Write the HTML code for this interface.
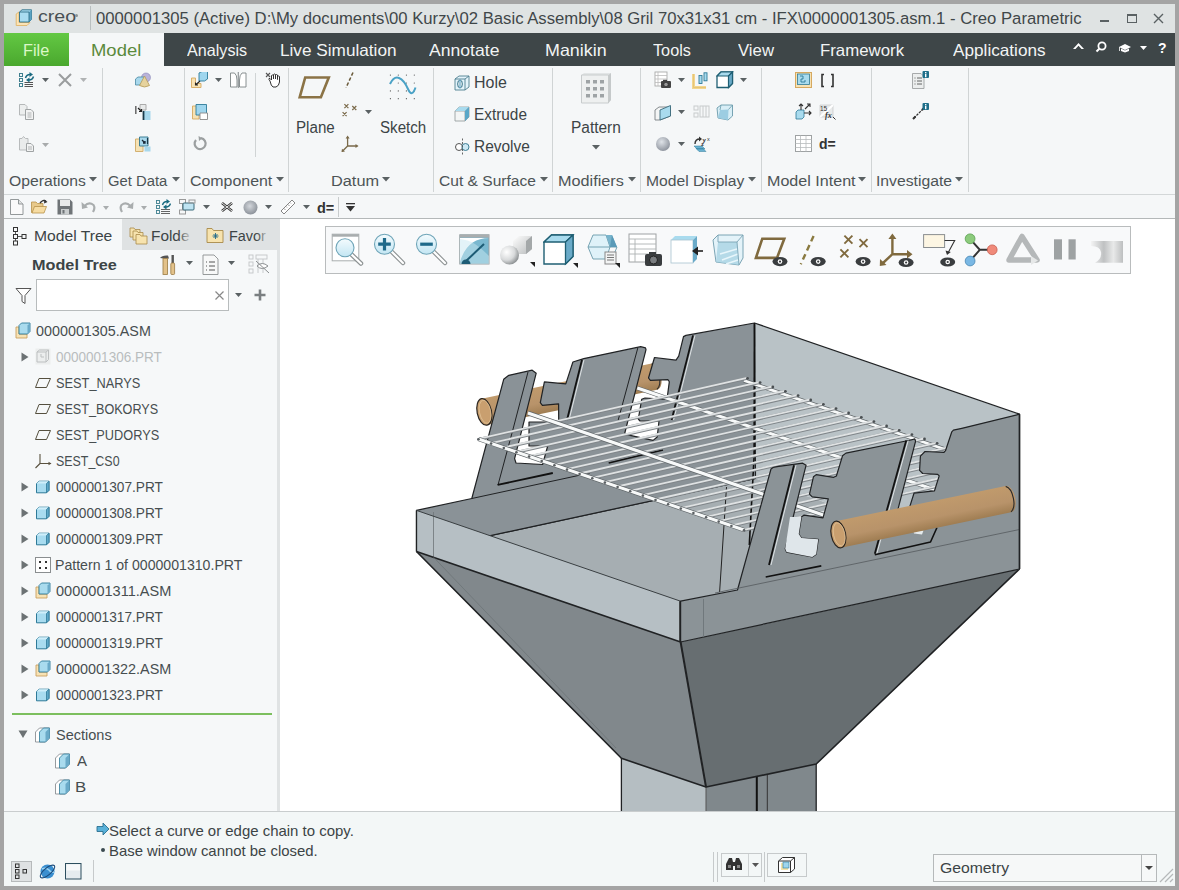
<!DOCTYPE html><html><head><meta charset="utf-8"><style>
html,body{margin:0;padding:0;width:1179px;height:890px;overflow:hidden;background:#a4a4a4;}
body{position:relative;font-family:"Liberation Sans",sans-serif;}
.t{position:absolute;white-space:pre;line-height:1;}
</style></head><body>
<div style="position:absolute;left:4px;top:4px;width:1171px;height:882px;background:#f5f7f8;"></div>
<div style="position:absolute;left:4px;top:4px;width:1171px;height:29px;background:#dfe3e3;"></div>
<svg style="position:absolute;left:15px;top:9px;" width="19" height="18" viewBox="0 0 19 18"><path d="M1.2 5 L4 3 V13.5 H15 L12 16.5 H1.2Z" fill="#fbe3b5" stroke="#e0b46a" stroke-width="0.9"/><path d="M4.5 3 L7 0.8 H16.5 V10.5 L14 13 H4.5Z" fill="#a9dcf0" stroke="#2f6f88" stroke-width="0.9"/><path d="M14 3 L16.5 0.8 V10.5 L14 13Z" fill="#5aa2c2"/><path d="M4.5 3 H14 V13" fill="none" stroke="#2f6f88" stroke-width="0.9"/></svg>
<div class="t" style="left:38.22px;top:9.16px;font-size:16px;color:#485053;transform:scaleX(1.2232);transform-origin:0 0;">creo</div>
<div style="position:absolute;left:75px;top:14px;width:3px;height:3px;background:#8a9294;border-radius:2px;"></div>
<div style="position:absolute;left:90px;top:6px;width:1px;height:24px;background:#b9bfc0;"></div>
<div class="t" style="left:95.63px;top:10.58px;font-size:16.8px;color:#3f4749;transform:scaleX(0.9941);transform-origin:0 0;">0000001305 (Active) D:\My documents\00 Kurzy\02 Basic Assembly\08 Gril 70x31x31 cm - IFX\0000001305.asm.1 - Creo Parametric</div>
<div style="position:absolute;left:1100px;top:20px;width:9px;height:2px;background:#5a6163;"></div>
<div style="position:absolute;left:1127px;top:14px;width:10px;height:9px;box-sizing:border-box;border:1px solid #5a6163;border-top-width:2px;"></div>
<svg style="position:absolute;left:1153px;top:13px;" width="11" height="11" viewBox="0 0 11 11"><path d="M1 1 L10 10 M10 1 L1 10" stroke="#5a6163" stroke-width="1.4"/></svg>
<div style="position:absolute;left:4px;top:33px;width:65px;height:33px;background:linear-gradient(#63c843,#4aa82e);"></div>
<div class="t" style="left:23.30px;top:41.63px;font-size:16.5px;color:#dcf7c8;transform:scaleX(0.9877);transform-origin:0 0;">File</div>
<div style="position:absolute;left:69px;top:33px;width:95px;height:33px;background:#f5f7f8;"></div>
<div class="t" style="left:90.72px;top:41.73px;font-size:16.5px;color:#5b8a3c;transform:scaleX(1.1180);transform-origin:0 0;">Model</div>
<div style="position:absolute;left:164px;top:33px;width:1011px;height:33px;background:#3e4648;"></div>
<div class="t" style="left:187.00px;top:41.73px;font-size:16.5px;color:#f2f4f4;transform:scaleX(0.9789);transform-origin:0 0;">Analysis</div>
<div class="t" style="left:279.63px;top:41.73px;font-size:16.5px;color:#f2f4f4;transform:scaleX(1.0413);transform-origin:0 0;">Live Simulation</div>
<div class="t" style="left:428.80px;top:41.73px;font-size:16.5px;color:#f2f4f4;transform:scaleX(1.0665);transform-origin:0 0;">Annotate</div>
<div class="t" style="left:545.17px;top:41.73px;font-size:16.5px;color:#f2f4f4;transform:scaleX(1.0836);transform-origin:0 0;">Manikin</div>
<div class="t" style="left:653.48px;top:41.73px;font-size:16.5px;color:#f2f4f4;transform:scaleX(0.9835);transform-origin:0 0;">Tools</div>
<div class="t" style="left:738.22px;top:41.73px;font-size:16.5px;color:#f2f4f4;transform:scaleX(1.0143);transform-origin:0 0;">View</div>
<div class="t" style="left:820.46px;top:41.73px;font-size:16.5px;color:#f2f4f4;transform:scaleX(1.0187);transform-origin:0 0;">Framework</div>
<div class="t" style="left:952.70px;top:41.73px;font-size:16.5px;color:#f2f4f4;transform:scaleX(1.0412);transform-origin:0 0;">Applications</div>
<svg style="position:absolute;left:1070px;top:38px;" width="100" height="20" viewBox="0 0 100 20"><path d="M3 11 L8.5 5 L14 11 L11.5 11 L8.5 7.8 L5.5 11Z" fill="#fff"/><circle cx="32" cy="8" r="3.6" fill="none" stroke="#fff" stroke-width="1.8"/><path d="M29.3 10.7 L26.5 13.5" stroke="#fff" stroke-width="2"/><path d="M49 9 L55 6 L61 9 L55 12Z" fill="#fff"/><path d="M51 10.5 L51 13 L55 14.5 L59 13 L59 10.5 L55 12.5Z" fill="#fff"/><path d="M49.5 9 L49.5 13" stroke="#fff" stroke-width="0.8"/><path d="M70 8 L77 8 L73.5 12Z" fill="#fff"/><text x="88" y="14.5" font-family="Liberation Sans" font-weight="bold" font-size="14" fill="#fff">?</text></svg>
<div style="position:absolute;left:4px;top:66px;width:1171px;height:128px;background:#f5f7f8;"></div>
<div style="position:absolute;left:4px;top:194px;width:1171px;height:1px;background:#d3d7d8;"></div>
<div style="position:absolute;left:102px;top:68px;width:1px;height:124px;background:#d0d4d5;"></div>
<div style="position:absolute;left:184px;top:68px;width:1px;height:124px;background:#d0d4d5;"></div>
<div style="position:absolute;left:288px;top:68px;width:1px;height:124px;background:#d0d4d5;"></div>
<div style="position:absolute;left:433px;top:68px;width:1px;height:124px;background:#d0d4d5;"></div>
<div style="position:absolute;left:552px;top:68px;width:1px;height:124px;background:#d0d4d5;"></div>
<div style="position:absolute;left:640px;top:68px;width:1px;height:124px;background:#d0d4d5;"></div>
<div style="position:absolute;left:761px;top:68px;width:1px;height:124px;background:#d0d4d5;"></div>
<div style="position:absolute;left:871px;top:68px;width:1px;height:124px;background:#d0d4d5;"></div>
<div style="position:absolute;left:968px;top:68px;width:1px;height:124px;background:#d0d4d5;"></div>
<div style="position:absolute;left:255px;top:73px;width:1px;height:84px;background:#d0d4d5;"></div>
<div class="t" style="left:8.99px;top:172.53px;font-size:15.2px;color:#4d5456;transform:scaleX(1.0340);transform-origin:0 0;">Operations</div>
<svg style="position:absolute;left:89.0px;top:176.5px;" width="8" height="5" viewBox="0 0 8 5"><path d="M0 0 L8 0 L4.0 4.5Z" fill="#5a6163"/></svg>
<div class="t" style="left:107.76px;top:172.53px;font-size:15.2px;color:#4d5456;transform:scaleX(0.9744);transform-origin:0 0;">Get Data</div>
<svg style="position:absolute;left:171.5px;top:176.5px;" width="8" height="5" viewBox="0 0 8 5"><path d="M0 0 L8 0 L4.0 4.5Z" fill="#5a6163"/></svg>
<div class="t" style="left:189.80px;top:172.53px;font-size:15.2px;color:#4d5456;transform:scaleX(1.0480);transform-origin:0 0;">Component</div>
<svg style="position:absolute;left:275.5px;top:176.5px;" width="8" height="5" viewBox="0 0 8 5"><path d="M0 0 L8 0 L4.0 4.5Z" fill="#5a6163"/></svg>
<div class="t" style="left:331.49px;top:172.53px;font-size:15.2px;color:#4d5456;transform:scaleX(1.0738);transform-origin:0 0;">Datum</div>
<svg style="position:absolute;left:382.0px;top:176.5px;" width="8" height="5" viewBox="0 0 8 5"><path d="M0 0 L8 0 L4.0 4.5Z" fill="#5a6163"/></svg>
<div class="t" style="left:438.72px;top:172.53px;font-size:15.2px;color:#4d5456;transform:scaleX(1.0249);transform-origin:0 0;">Cut &amp; Surface</div>
<svg style="position:absolute;left:540.0px;top:176.5px;" width="8" height="5" viewBox="0 0 8 5"><path d="M0 0 L8 0 L4.0 4.5Z" fill="#5a6163"/></svg>
<div class="t" style="left:557.70px;top:172.53px;font-size:15.2px;color:#4d5456;transform:scaleX(1.0687);transform-origin:0 0;">Modifiers</div>
<svg style="position:absolute;left:628.0px;top:176.5px;" width="8" height="5" viewBox="0 0 8 5"><path d="M0 0 L8 0 L4.0 4.5Z" fill="#5a6163"/></svg>
<div class="t" style="left:645.55px;top:172.53px;font-size:15.2px;color:#4d5456;transform:scaleX(1.0314);transform-origin:0 0;">Model Display</div>
<svg style="position:absolute;left:748.0px;top:176.5px;" width="8" height="5" viewBox="0 0 8 5"><path d="M0 0 L8 0 L4.0 4.5Z" fill="#5a6163"/></svg>
<div class="t" style="left:766.51px;top:172.53px;font-size:15.2px;color:#4d5456;transform:scaleX(1.0594);transform-origin:0 0;">Model Intent</div>
<svg style="position:absolute;left:858.0px;top:176.5px;" width="8" height="5" viewBox="0 0 8 5"><path d="M0 0 L8 0 L4.0 4.5Z" fill="#5a6163"/></svg>
<div class="t" style="left:875.58px;top:172.53px;font-size:15.2px;color:#4d5456;transform:scaleX(1.0358);transform-origin:0 0;">Investigate</div>
<svg style="position:absolute;left:955.0px;top:176.5px;" width="8" height="5" viewBox="0 0 8 5"><path d="M0 0 L8 0 L4.0 4.5Z" fill="#5a6163"/></svg>
<div class="t" style="left:295.69px;top:120.36px;font-size:16px;color:#3c4446;transform:scaleX(0.9465);transform-origin:0 0;">Plane</div>
<div class="t" style="left:380.02px;top:120.36px;font-size:16px;color:#3c4446;transform:scaleX(0.9444);transform-origin:0 0;">Sketch</div>
<div class="t" style="left:474.32px;top:75.26px;font-size:16px;color:#3c4446;transform:scaleX(0.9974);transform-origin:0 0;">Hole</div>
<div class="t" style="left:474.37px;top:106.96px;font-size:16px;color:#3c4446;transform:scaleX(0.9601);transform-origin:0 0;">Extrude</div>
<div class="t" style="left:474.36px;top:138.76px;font-size:16px;color:#3c4446;transform:scaleX(0.9666);transform-origin:0 0;">Revolve</div>
<div class="t" style="left:571.46px;top:119.96px;font-size:16px;color:#3c4446;transform:scaleX(0.9659);transform-origin:0 0;">Pattern</div>
<svg style="position:absolute;left:592.4px;top:144.5px;" width="8" height="5" viewBox="0 0 8 5"><path d="M0 0 L8 0 L4.0 4.5Z" fill="#5a6163"/></svg>
<div style="position:absolute;left:338px;top:197px;width:1px;height:20px;background:#c8cccd;"></div>
<div style="position:absolute;left:4px;top:219px;width:275px;height:592px;background:#f6f8f9;"></div>
<div style="position:absolute;left:122px;top:219px;width:158px;height:31px;background:#dfe2e3;"></div>
<div style="position:absolute;left:277px;top:250px;width:3px;height:561px;background:#e0e3e4;"></div>
<div style="position:absolute;left:280px;top:219px;width:895px;height:592px;background:#ffffff;"></div>
<div style="position:absolute;left:4px;top:218px;width:1171px;height:1px;background:#b4b8b9;"></div>
<div class="t" style="left:34.45px;top:227.85px;font-size:15.3px;color:#3c4446;transform:scaleX(1.0230);transform-origin:0 0;">Model Tree</div>
<div class="t" style="left:151.27px;top:227.85px;font-size:15.3px;color:#3c4446;transform:scaleX(1.0045);transform-origin:0 0;">Folde</div>
<div style="position:absolute;left:178px;top:225px;width:12px;height:20px;background:linear-gradient(90deg,rgba(223,226,227,0),rgba(223,226,227,0.85));"></div>
<div class="t" style="left:229.35px;top:227.85px;font-size:15.3px;color:#3c4446;transform:scaleX(0.9432);transform-origin:0 0;">Favor</div>
<div style="position:absolute;left:256px;top:225px;width:12px;height:20px;background:linear-gradient(90deg,rgba(223,226,227,0),rgba(223,226,227,0.85));"></div>
<div class="t" style="left:31.64px;top:257.43px;font-size:15.2px;color:#3c4446;font-weight:bold;transform:scaleX(1.0693);transform-origin:0 0;">Model Tree</div>
<div style="position:absolute;left:36px;top:279px;width:193px;height:32px;box-sizing:border-box;background:#fff;border:1px solid #b8bcbd;"></div>
<div style="position:absolute;left:4px;top:811px;width:1171px;height:75px;background:#f3f7f7;"></div>
<div style="position:absolute;left:4px;top:811px;width:1171px;height:1px;background:#c9cdce;"></div>
<div class="t" style="left:109.33px;top:823.30px;font-size:15px;color:#3c4446;transform:scaleX(0.9963);transform-origin:0 0;">Select a curve or edge chain to copy.</div>
<div class="t" style="left:109.31px;top:843.20px;font-size:15px;color:#3c4446;transform:scaleX(0.9931);transform-origin:0 0;">Base window cannot be closed.</div>
<svg style="position:absolute;left:18px;top:72px;" width="17" height="16" viewBox="0 0 17 16"><rect x="1.5" y="1.5" width="3" height="3" fill="none" stroke="#3f7f8f" stroke-width="1"/><rect x="1.5" y="6.5" width="3" height="3" fill="none" stroke="#3f7f8f" stroke-width="1"/><rect x="1.5" y="11.5" width="3" height="3" fill="none" stroke="#3f7f8f" stroke-width="1"/><path d="M6.5 10.5 H15 M6.5 12.5 H15 M6.5 14.5 H15" stroke="#555" stroke-width="1"/><path d="M7.5 6 Q8.5 2.5 12 2.5" fill="none" stroke="#1a6a80" stroke-width="1.5"/><path d="M11.5 0 L15 2.5 L11.5 5Z" fill="#1a6a80"/><path d="M15.5 4.5 Q14.5 8 11 8" fill="none" stroke="#1a6a80" stroke-width="1.5"/><path d="M11.5 5.5 L8 8 L11.5 10.5Z" fill="#1a6a80"/></svg>
<svg style="position:absolute;left:42.0px;top:78px;" width="7" height="4.5" viewBox="0 0 7 4.5"><path d="M0 0 L7 0 L3.5 4Z" fill="#5a6163"/></svg>
<svg style="position:absolute;left:58px;top:73px;" width="14" height="14" viewBox="0 0 14 14"><path d="M1 1 L13 13 M13 1 L1 13" stroke="#9a9d9e" stroke-width="2"/></svg>
<svg style="position:absolute;left:80.0px;top:78px;" width="7" height="4.5" viewBox="0 0 7 4.5"><path d="M0 0 L7 0 L3.5 4Z" fill="#b0b3b4"/></svg>
<svg style="position:absolute;left:19px;top:104px;" width="16" height="16" viewBox="0 0 16 16"><path d="M0.5 0.5 H6 L8 2.5 V11 H0.5Z" fill="#eceeee" stroke="#b5b8b9"/><path d="M6.5 5.5 H12 L14.5 8 V15.5 H6.5Z" fill="#f2f3f3" stroke="#9fa3a4"/><path d="M8.5 9 H12.5 M8.5 11 H12.5 M8.5 13 H12.5" stroke="#b0b3b4"/></svg>
<svg style="position:absolute;left:19px;top:136px;" width="17" height="16" viewBox="0 0 17 16"><path d="M0.5 2.5 H3 L4.5 0.5 L6.5 2.5 H9 V14 H0.5Z" fill="#e9ebeb" stroke="#b8bbbc"/><path d="M7.5 7.5 H12 L14.5 10 V15.5 H7.5Z" fill="#f2f3f3" stroke="#9fa3a4"/><path d="M9 11 H13 M9 13 H13" stroke="#b0b3b4"/></svg>
<svg style="position:absolute;left:42.0px;top:143px;" width="7" height="4.5" viewBox="0 0 7 4.5"><path d="M0 0 L7 0 L3.5 4Z" fill="#a8abac"/></svg>
<svg style="position:absolute;left:135px;top:72px;" width="16" height="16" viewBox="0 0 16 16"><circle cx="11" cy="5.5" r="4.5" fill="#b9b3d9" stroke="#8a86b8" stroke-width="0.6"/><path d="M0.5 7 L3 5 H9 V11 L7 13 H0.5Z" fill="#a8d8ec" stroke="#4a8aa5" stroke-width="0.8"/><path d="M9.5 4 L14.5 13.5 Q9.5 16.5 4.5 13.5Z" fill="#e6d39e" stroke="#b39a5a" stroke-width="0.8"/></svg>
<svg style="position:absolute;left:135px;top:104px;" width="16" height="16" viewBox="0 0 16 16"><path d="M5 0.5 H11 V6 H5Z" fill="#e8eaea" stroke="#aaa"/><path d="M0.8 2 V10" stroke="#666" stroke-width="1.5"/><path d="M3 4 L6.5 7.5 M4 7.5 H6.5 V5" stroke="#222" stroke-width="1.2" fill="none"/><rect x="9" y="7" width="6.5" height="9" fill="#a8d8ec"/><path d="M8.5 7 V16" stroke="#1a3a4a" stroke-width="1.8"/></svg>
<svg style="position:absolute;left:135px;top:136px;" width="16" height="16" viewBox="0 0 16 16"><path d="M0.5 3 H8 V15.5 H0.5Z" fill="#f5e2b5" stroke="#d3b070"/><path d="M4.5 1 H13 V10 H4.5Z" fill="#a8d8ec" stroke="#3f7f95"/><path d="M7 4 L10 7 M8 7 H10 V5" stroke="#1a2a3a" stroke-width="1.3" fill="none"/><rect x="9.5" y="10.5" width="6" height="5" fill="#a8d8ec"/><path d="M12.5 2 V8" stroke="#1a3a4a" stroke-width="1.2"/></svg>
<svg style="position:absolute;left:191px;top:72px;" width="18" height="16" viewBox="0 0 18 16"><path d="M0.5 6 H4.5 V11.5 H10 V15.5 H0.5Z" fill="#f7e2b4" stroke="#d6a960" stroke-width="0.9"/><path d="M8 1 L11 -0.5 H16.5 V7 L13.5 9 H8Z" fill="#9fd6ee" stroke="#2e7a98" stroke-width="0.9"/><path d="M9 9 L4.5 13 M4.5 10.5 V13 H7" stroke="#222" stroke-width="1.1" fill="none"/></svg>
<svg style="position:absolute;left:215.0px;top:78px;" width="7" height="4.5" viewBox="0 0 7 4.5"><path d="M0 0 L7 0 L3.5 4Z" fill="#5a6163"/></svg>
<svg style="position:absolute;left:230px;top:72px;" width="17" height="16" viewBox="0 0 17 16"><path d="M0.5 1 L4.5 1 Q7 3 7 8 V15 H0.5Z" fill="#fff" stroke="#7d8486" stroke-width="0.9"/><path d="M16 1 L12 1 Q9.5 3 9.5 8 V15 H16Z" fill="#fff" stroke="#7d8486" stroke-width="0.9"/><path d="M8.25 0 V16" stroke="#7d8486"/></svg>
<svg style="position:absolute;left:265px;top:72px;" width="16" height="16" viewBox="0 0 16 16"><path d="M1 1 L5 5 M5 1 L1 5" stroke="#555" stroke-width="1.1"/><path d="M5 9 L4 7.5 Q3.5 6 5 6.5 L6.5 8 V3.5 Q7.5 2.5 8.5 3.5 V7 V2.5 Q9.5 1.5 10.5 2.5 V7 V3 Q11.5 2 12.5 3 V7.5 V4.5 Q13.5 3.5 14.5 4.5 V10 Q14 14 11 15 H8 Q6 14 5 9Z" fill="#fff" stroke="#333" stroke-width="1"/></svg>
<svg style="position:absolute;left:192px;top:104px;" width="16" height="16" viewBox="0 0 16 16"><path d="M0.5 2 H7 V15 H0.5Z" fill="#f7e2b4" stroke="#d6a960" stroke-width="0.9"/><path d="M4 0.5 H14.5 V11 H4Z" fill="#9fd6ee" stroke="#2e7a98" stroke-width="0.9"/><path d="M8 9 H15.5 V15.5 H8Z" fill="#fff" stroke="#888" stroke-width="0.9"/></svg>
<svg style="position:absolute;left:193px;top:136px;" width="15" height="15" viewBox="0 0 15 15"><path d="M3 4 A5.5 5.5 0 1 0 8 2.2" fill="none" stroke="#9b9fa0" stroke-width="2.2"/><path d="M5.5 0 L9.5 2.3 L6 5Z" fill="#9b9fa0"/></svg>
<svg style="position:absolute;left:297px;top:75px;" width="34" height="24" viewBox="0 0 34 24"><path d="M8.2 2.5 H31.8 L23.9 22.3 H2.7Z" fill="none" stroke="#8b7346" stroke-width="2.6" stroke-linejoin="miter"/></svg>
<svg style="position:absolute;left:343px;top:71px;" width="12" height="18" viewBox="0 0 12 18"><path d="M10 1.5 L3 16.8" stroke="#6a5a3a" stroke-width="1.5" stroke-dasharray="3.5 2"/></svg>
<svg style="position:absolute;left:341px;top:103px;" width="18" height="16" viewBox="0 0 18 16"><path d="M3.4 1.2 L7.4 5.2 M7.4 1.2 L3.4 5.2 M11.3 3 L15.3 7 M15.3 3 L11.3 7 M1.6 9.1 L5.6 13.1 M5.6 9.1 L1.6 13.1" stroke="#7a6a4a" stroke-width="1.2"/></svg>
<svg style="position:absolute;left:365.1px;top:110px;" width="7" height="4.5" viewBox="0 0 7 4.5"><path d="M0 0 L7 0 L3.5 4Z" fill="#5a6163"/></svg>
<svg style="position:absolute;left:340px;top:134px;" width="20" height="20" viewBox="0 0 20 20"><path d="M7.6 12 V3 M7.6 12 H17.3 M7.6 12 L2.2 17.5" stroke="#7a6a4a" stroke-width="1.3" fill="none"/><path d="M5.6 4.5 L7.6 1.5 L9.6 4.5Z M15.5 10 L18.5 12 L15.5 14Z M2 14.8 L1.5 18 L5 17.6Z" fill="#7a6a4a"/></svg>
<svg style="position:absolute;left:388px;top:73px;" width="30" height="28" viewBox="0 0 30 28"><g fill="#555"><circle cx="2.4" cy="2.1" r="0.6"/><circle cx="2.4" cy="10" r="0.6"/><circle cx="2.4" cy="17.9" r="0.6"/><circle cx="2.4" cy="25.7" r="0.6"/><circle cx="10.3" cy="2.1" r="0.6"/><circle cx="10.3" cy="10" r="0.6"/><circle cx="10.3" cy="17.9" r="0.6"/><circle cx="10.3" cy="25.7" r="0.6"/><circle cx="18.4" cy="2.1" r="0.6"/><circle cx="18.4" cy="10" r="0.6"/><circle cx="18.4" cy="17.9" r="0.6"/><circle cx="18.4" cy="25.7" r="0.6"/><circle cx="26.3" cy="2.1" r="0.6"/><circle cx="26.3" cy="10" r="0.6"/><circle cx="26.3" cy="17.9" r="0.6"/><circle cx="26.3" cy="25.7" r="0.6"/></g><path d="M2 11 Q6 3 11 5 T20 16 T27.5 14.5" fill="none" stroke="#4aa2c6" stroke-width="2"/></svg>
<svg style="position:absolute;left:454px;top:75px;" width="17" height="16" viewBox="0 0 17 16"><path d="M1 4 L5 1 H15 V12 L11 15 H1Z" fill="#e3f3fa" stroke="#4f7f90" stroke-width="0.9"/><path d="M1 4 H11 V15 M11 4 L15 1" fill="none" stroke="#4f7f90" stroke-width="0.9"/><ellipse cx="6" cy="9" rx="2.3" ry="4" fill="#fff" stroke="#2f6f85" stroke-width="1"/><path d="M6 5 V13" stroke="#6aaac8" stroke-width="1.3"/></svg>
<svg style="position:absolute;left:454px;top:106px;" width="17" height="16" viewBox="0 0 17 16"><path d="M1 5 L5 1 H15 V11 L11 15 H1Z" fill="#f3f5f5" stroke="#9aa0a2" stroke-width="0.9"/><path d="M1 5 H11 V15 M11 5 L15 1" fill="none" stroke="#9aa0a2" stroke-width="0.9"/><path d="M5 1 H15 L11 5 H1Z" fill="#a9dbee"/><path d="M15 1 V11 L11 15 V5Z" fill="#5aa7c8"/></svg>
<svg style="position:absolute;left:454px;top:138px;" width="17" height="17" viewBox="0 0 17 17"><circle cx="5" cy="9" r="3.5" fill="#fff" stroke="#555" stroke-width="1"/><circle cx="11.5" cy="9" r="3.5" fill="#cde9f4" stroke="#3f7f95" stroke-width="1"/><path d="M8.5 0.5 V16.5" stroke="#555" stroke-width="0.9" stroke-dasharray="2 1.5"/></svg>
<svg style="position:absolute;left:580px;top:72px;" width="33" height="32" viewBox="0 0 33 32"><path d="M1.5 3 L4 1 H31 V28 L28.5 31 H1.5Z" fill="#e2e5e6"/><path d="M1.5 3 H28.5 V31 H1.5Z" fill="#eef0f0" stroke="#c8cccd" stroke-width="1"/><path d="M28.5 3 L31 1 V28 L28.5 31Z" fill="#c5c9ca"/><rect x="6" y="8" width="4" height="3.5" fill="#9ea3a5"/><rect x="6" y="15" width="4" height="3.5" fill="#9ea3a5"/><rect x="6" y="22" width="4" height="3.5" fill="#9ea3a5"/><rect x="13" y="8" width="4" height="3.5" fill="#9ea3a5"/><rect x="13" y="15" width="4" height="3.5" fill="#9ea3a5"/><rect x="13" y="22" width="4" height="3.5" fill="#9ea3a5"/><rect x="20" y="8" width="4" height="3.5" fill="#9ea3a5"/><rect x="20" y="15" width="4" height="3.5" fill="#9ea3a5"/><rect x="20" y="22" width="4" height="3.5" fill="#9ea3a5"/></svg>
<svg style="position:absolute;left:654px;top:71px;" width="18" height="18" viewBox="0 0 18 18"><rect x="1" y="1" width="12" height="14" fill="#fff" stroke="#aaa" stroke-width="0.9"/><path d="M1 4.5 H13 M1 8 H13 M1 11.5 H13 M4 1 V15" stroke="#bbb" stroke-width="0.8"/><rect x="7" y="10" width="10" height="7" rx="1" fill="#444"/><circle cx="12" cy="13.5" r="2.2" fill="#999" stroke="#222" stroke-width="0.6"/><rect x="9" y="8.8" width="4" height="1.5" fill="#444"/></svg>
<svg style="position:absolute;left:677.9px;top:78px;" width="7" height="4.5" viewBox="0 0 7 4.5"><path d="M0 0 L7 0 L3.5 4Z" fill="#5a6163"/></svg>
<svg style="position:absolute;left:692px;top:72px;" width="18" height="17" viewBox="0 0 18 17"><path d="M1.5 2 V15.5 H14" fill="none" stroke="#f3d68e" stroke-width="3"/><path d="M1.5 2 V15.5 H14" fill="none" stroke="#d8b460" stroke-width="0.5"/><rect x="7" y="3.5" width="3" height="8" fill="#a9dbee" stroke="#2e7a98" stroke-width="0.9"/><rect x="12" y="0.8" width="3" height="8" fill="#a9dbee" stroke="#2e7a98" stroke-width="0.9"/></svg>
<svg style="position:absolute;left:716px;top:71px;" width="18" height="18" viewBox="0 0 18 18"><path d="M1 5 L5 1 H16.5 V12.5 L12.5 16.5 H1Z" fill="#fff" stroke="#1f5f73" stroke-width="1.3"/><path d="M5 1 H16.5 L12.5 5 H1Z" fill="#a9dbee" stroke="#1f5f73" stroke-width="1.2"/><path d="M16.5 1 V12.5 L12.5 16.5 V5Z" fill="#6aaac8" stroke="#1f5f73" stroke-width="1.2"/></svg>
<svg style="position:absolute;left:740.2px;top:78px;" width="7" height="4.5" viewBox="0 0 7 4.5"><path d="M0 0 L7 0 L3.5 4Z" fill="#5a6163"/></svg>
<svg style="position:absolute;left:654px;top:104px;" width="18" height="17" viewBox="0 0 18 17"><path d="M1 6 L5 3 H16.5 V12 L6 16 H1Z" fill="#f3f5f5" stroke="#7a8083" stroke-width="0.9"/><path d="M6 6 L16.5 1.5 V12 L6 16Z" fill="#a9dbee" stroke="#3a6a7a" stroke-width="0.9"/></svg>
<svg style="position:absolute;left:677.9px;top:109.5px;" width="7" height="4.5" viewBox="0 0 7 4.5"><path d="M0 0 L7 0 L3.5 4Z" fill="#5a6163"/></svg>
<svg style="position:absolute;left:693px;top:105px;" width="17" height="14" viewBox="0 0 17 14"><rect x="1" y="1" width="4" height="4" fill="none" stroke="#c8cbcc"/><rect x="1" y="8" width="4" height="4" fill="none" stroke="#c8cbcc"/><rect x="7" y="1" width="9" height="11" fill="none" stroke="#c8cbcc"/><path d="M10 1 V12 M13 1 V12" stroke="#c8cbcc"/></svg>
<svg style="position:absolute;left:716px;top:104px;" width="18" height="17" viewBox="0 0 18 17"><path d="M1 4 L5 1 H16.5 V12 L12 16 L2 14Z" fill="#d8eef6" stroke="#6a9aaa" stroke-width="0.9"/><path d="M4 6 L12.5 5.5 L12 16 L2 14Z" fill="#9ccde2"/><path d="M5 1 L4 6 M16.5 1 L12.5 5.5" stroke="#6a9aaa" stroke-width="0.8"/></svg>
<svg style="position:absolute;left:655px;top:136px;" width="16" height="16" viewBox="0 0 16 16"><defs><radialGradient id="sph1" cx="0.4" cy="0.35" r="0.7"><stop offset="0" stop-color="#dfe3e8"/><stop offset="1" stop-color="#8a909a"/></radialGradient></defs><circle cx="8" cy="8" r="7" fill="url(#sph1)"/></svg>
<svg style="position:absolute;left:677.9px;top:142px;" width="7" height="4.5" viewBox="0 0 7 4.5"><path d="M0 0 L7 0 L3.5 4Z" fill="#5a6163"/></svg>
<svg style="position:absolute;left:693px;top:135px;" width="18" height="17" viewBox="0 0 18 17"><path d="M2 9 Q2 4 7 4" fill="none" stroke="#333" stroke-width="1.4"/><path d="M6 1.5 L9 4 L6 6.5Z" fill="#333"/><text x="9.5" y="6.5" font-size="6" font-family="Liberation Sans" font-weight="bold" fill="#333">y</text><text x="14" y="5.5" font-size="5.5" font-family="Liberation Sans" fill="#333">x</text><text x="8" y="11" font-size="6" font-family="Liberation Sans" font-weight="bold" fill="#333">z</text><path d="M1 11 H9 L12 14 H4Z M3 13.5 H10 L13 16.5 H6Z" fill="#6ab2d2" stroke="#2e7a98" stroke-width="0.5"/></svg>
<svg style="position:absolute;left:795px;top:72px;" width="17" height="16" viewBox="0 0 17 16"><rect x="0.5" y="0.5" width="16" height="15" fill="#f7e2b4" stroke="#d6a960"/><rect x="2.5" y="2" width="12" height="10.5" fill="#a9dbee" stroke="#2e7a98" stroke-width="0.8"/><path d="M5 4 H8 V7 H6 V10 H10 V8" fill="none" stroke="#2e7a98" stroke-width="0.9"/></svg>
<svg style="position:absolute;left:820px;top:73px;" width="15" height="15" viewBox="0 0 15 15"><path d="M4 1.5 H2 V13.5 H4 M11 1.5 H13 V13.5 H11" fill="none" stroke="#333" stroke-width="1.6"/></svg>
<svg style="position:absolute;left:795px;top:103px;" width="17" height="17" viewBox="0 0 17 17"><path d="M1 9 L3 7 H9 V14 L7 16 H1Z" fill="#a9dbee" stroke="#2e7a98" stroke-width="0.8"/><path d="M6 7 V1 M4 3 L6 1 L8 3 M9 10 H16 M14 8 L16 10 L14 12 M10 6 L15 1 M12 1 H15 V4" stroke="#333" stroke-width="1.1" fill="none"/></svg>
<svg style="position:absolute;left:819px;top:103px;" width="18" height="18" viewBox="0 0 18 18"><path d="M1 2 H14 V14 H1Z" fill="#e9ebeb" stroke="#b0b3b4" stroke-width="0.5"/><path d="M1 14 L14 2" stroke="#fff" stroke-width="2"/><text x="1" y="7.5" font-size="6.5" font-family="Liberation Sans" fill="#333">15</text><text x="6" y="14.5" font-size="8" font-style="italic" font-family="Liberation Serif" font-weight="bold" fill="#333">fx</text><path d="M14 14 L16.5 16.5" stroke="#333"/></svg>
<svg style="position:absolute;left:795px;top:135px;" width="17" height="17" viewBox="0 0 17 17"><rect x="0.5" y="0.5" width="16" height="16" fill="#fff" stroke="#9ea2a3"/><path d="M0.5 4.5 H16.5 M0.5 8.5 H16.5 M0.5 12.5 H16.5 M5.5 0.5 V16.5 M11 0.5 V16.5" stroke="#b8bbbc" stroke-width="0.8"/></svg>
<svg style="position:absolute;left:819px;top:136px;" width="18" height="14" viewBox="0 0 18 14"><text x="0" y="12.5" font-size="14" font-family="Liberation Sans" font-weight="bold" fill="#333">d=</text></svg>
<svg style="position:absolute;left:912px;top:71px;" width="17" height="18" viewBox="0 0 17 18"><path d="M0.5 2.5 H9 L12 5.5 V17.5 H0.5Z" fill="#eceeee" stroke="#9ea2a3" stroke-width="0.9"/><path d="M2.5 7 H3.5 M5 7 H10 M2.5 10 H3.5 M5 10 H10 M2.5 13 H3.5 M5 13 H10" stroke="#555" stroke-width="0.9"/><rect x="10.5" y="0" width="6.5" height="7" rx="1" fill="#1f6f8a"/><rect x="13" y="2.8" width="1.4" height="3.4" fill="#fff"/><rect x="13" y="1" width="1.4" height="1.2" fill="#fff"/></svg>
<svg style="position:absolute;left:912px;top:103px;" width="17" height="17" viewBox="0 0 17 17"><path d="M2 15 L11 6" stroke="#333" stroke-width="1.2" stroke-dasharray="2.5 1"/><path d="M1 16 L3.5 13.5 M10 7 L12 5" stroke="#333" stroke-width="2"/><rect x="10.5" y="0" width="6.5" height="7" rx="1" fill="#1f6f8a"/><rect x="13" y="2.8" width="1.4" height="3.4" fill="#fff"/><rect x="13" y="1" width="1.4" height="1.2" fill="#fff"/></svg>
<svg style="position:absolute;left:10px;top:199px;" width="14" height="16" viewBox="0 0 14 16"><path d="M0.5 0.5 H8.5 L13 5 V15.5 H0.5Z" fill="#fafafa" stroke="#888d8f" stroke-width="0.9"/><path d="M8.5 0.5 V5 H13" fill="#e0e2e2" stroke="#888d8f" stroke-width="0.9"/></svg>
<svg style="position:absolute;left:31px;top:198px;" width="18" height="17" viewBox="0 0 18 17"><path d="M0.5 4 H5 L6.5 5.5 H12 V14.5 H0.5Z" fill="#e8c98a" stroke="#b8924a" stroke-width="0.8"/><path d="M1 15 L3.5 8.5 H15.5 L13 15Z" fill="#f6dca2" stroke="#b8924a" stroke-width="0.8"/><path d="M9 5 Q12 1 15 3.5" fill="none" stroke="#333" stroke-width="1.4"/><path d="M13.5 1.5 L16.5 4 L13 5.5Z" fill="#333"/></svg>
<svg style="position:absolute;left:57px;top:199px;" width="16" height="16" viewBox="0 0 16 16"><path d="M0.5 0.5 H13 L15.5 3 V15.5 H0.5Z" fill="#6f7477"/><rect x="3" y="1" width="10" height="6" fill="#e8eaea"/><rect x="4" y="10" width="8" height="5.5" fill="#c9cdce"/><rect x="5.5" y="11" width="2" height="3.5" fill="#6f7477"/></svg>
<svg style="position:absolute;left:81px;top:200px;" width="15" height="14" viewBox="0 0 15 14"><path d="M3.5 6 Q8 1.5 12.5 5 Q14.5 8 12 12" fill="none" stroke="#a9adae" stroke-width="2.2"/><path d="M0.5 2 L1 9 L7 7.5Z" fill="#a9adae"/></svg>
<svg style="position:absolute;left:103.0px;top:206px;" width="6" height="4.5" viewBox="0 0 6 4.5"><path d="M0 0 L6 0 L3.0 4Z" fill="#a9adae"/></svg>
<svg style="position:absolute;left:119px;top:200px;" width="15" height="14" viewBox="0 0 15 14"><path d="M11.5 6 Q7 1.5 2.5 5 Q0.5 8 3 12" fill="none" stroke="#a9adae" stroke-width="2.2"/><path d="M14.5 2 L14 9 L8 7.5Z" fill="#a9adae"/></svg>
<svg style="position:absolute;left:141.3px;top:206px;" width="6" height="4.5" viewBox="0 0 6 4.5"><path d="M0 0 L6 0 L3.0 4Z" fill="#a9adae"/></svg>
<svg style="position:absolute;left:156px;top:199px;" width="15" height="16" viewBox="0 0 15 16"><rect x="0.5" y="1.5" width="3" height="3" fill="none" stroke="#3f7f8f" stroke-width="0.9"/><rect x="0.5" y="6.5" width="3" height="3" fill="none" stroke="#3f7f8f" stroke-width="0.9"/><rect x="0.5" y="11.5" width="3" height="3" fill="none" stroke="#3f7f8f" stroke-width="0.9"/><path d="M5 10.5 H14 M5 12.5 H14 M5 14.5 H14" stroke="#555" stroke-width="0.9"/><path d="M6.5 6 Q7.5 2.5 11 2.5" fill="none" stroke="#1a6a80" stroke-width="1.4"/><path d="M10.5 0 L14 2.5 L10.5 5Z" fill="#1a6a80"/><path d="M14.5 4.5 Q13.5 8 10 8" fill="none" stroke="#1a6a80" stroke-width="1.4"/><path d="M10.5 5.5 L7 8 L10.5 10.5Z" fill="#1a6a80"/></svg>
<svg style="position:absolute;left:179px;top:199px;" width="17" height="16" viewBox="0 0 17 16"><rect x="0.5" y="0.5" width="6" height="4" fill="none" stroke="#999"/><rect x="0.5" y="11" width="6" height="4" fill="none" stroke="#999"/><path d="M3.5 4.5 V11" stroke="#999"/><rect x="4" y="4" width="11" height="7" rx="1" fill="#bfe4f2" stroke="#3a6a7a" stroke-width="1"/><rect x="10" y="1" width="6" height="3" fill="none" stroke="#999"/></svg>
<svg style="position:absolute;left:203.0px;top:205px;" width="7" height="4.5" viewBox="0 0 7 4.5"><path d="M0 0 L7 0 L3.5 4Z" fill="#5a6163"/></svg>
<svg style="position:absolute;left:221px;top:202px;" width="12" height="10" viewBox="0 0 12 10"><path d="M1 1 L11 9 M11 1 L1 9" stroke="#333" stroke-width="2.6"/><path d="M1 1 L11 9 M11 1 L1 9" stroke="#fff" stroke-width="0.9"/></svg>
<svg style="position:absolute;left:243px;top:200px;" width="15" height="15" viewBox="0 0 15 15"><defs><radialGradient id="sph2" cx="0.45" cy="0.4" r="0.65"><stop offset="0" stop-color="#d3d7dc"/><stop offset="1" stop-color="#868c94"/></radialGradient></defs><circle cx="7.5" cy="7.5" r="7" fill="url(#sph2)"/></svg>
<svg style="position:absolute;left:264.9px;top:205px;" width="7" height="4.5" viewBox="0 0 7 4.5"><path d="M0 0 L7 0 L3.5 4Z" fill="#5a6163"/></svg>
<svg style="position:absolute;left:280px;top:199px;" width="16" height="16" viewBox="0 0 16 16"><path d="M1 12 L12 1 L15 4 L4 15Z" fill="#fff" stroke="#777" stroke-width="0.9"/><path d="M4 9.5 L5.5 11 M6 7.5 L7 8.5 M8 5.5 L9.5 7 M10 3.5 L11 4.5" stroke="#777" stroke-width="0.8"/></svg>
<svg style="position:absolute;left:303.0px;top:205px;" width="7" height="4.5" viewBox="0 0 7 4.5"><path d="M0 0 L7 0 L3.5 4Z" fill="#5a6163"/></svg>
<svg style="position:absolute;left:317px;top:200px;" width="17" height="14" viewBox="0 0 17 14"><text x="0" y="12.5" font-size="14.5" font-family="Liberation Sans" font-weight="bold" fill="#333">d=</text></svg>
<svg style="position:absolute;left:346px;top:203px;" width="9" height="9" viewBox="0 0 9 9"><rect x="0" y="0" width="9" height="1.3" fill="#333"/><path d="M0 3 H9 L4.5 8.5Z" fill="#333"/></svg>
<div style="position:absolute;left:324.5px;top:226px;width:806px;height:48px;box-sizing:border-box;background:#f8f9fa;border:1px solid #b9bcbd;"></div>
<svg style="position:absolute;left:331px;top:233px;" width="34" height="33" viewBox="0 0 34 33"><defs><linearGradient id="lens" x1="0" y1="0" x2="0" y2="1"><stop offset="0" stop-color="#f4fbfe"/><stop offset="1" stop-color="#c3e6f3"/></linearGradient></defs><rect x="1.2" y="1.2" width="26.6" height="26.6" fill="#fff" stroke="#a9adae" stroke-width="1"/><rect x="1.2" y="1.2" width="26.6" height="2.5" fill="#a9adae"/><path d="M19 20 L30 30.5" stroke="#8e9394" stroke-width="4.5" stroke-linecap="round"/><path d="M19 20 L30 30.5" stroke="#fff" stroke-width="2.2" stroke-linecap="round"/><circle cx="14" cy="14.8" r="9" fill="url(#lens)" stroke="#6fa5b8" stroke-width="1.1"/></svg>
<svg style="position:absolute;left:373px;top:232px;" width="34" height="34" viewBox="0 0 34 34"><path d="M17.5 18.5 L30 31" stroke="#8e9394" stroke-width="4.5" stroke-linecap="round"/><path d="M17.5 18.5 L30 31" stroke="#fff" stroke-width="2.2" stroke-linecap="round"/><circle cx="11.5" cy="12.2" r="10" fill="url(#lens)" stroke="#6fa5b8" stroke-width="1.1"/><path d="M11.5 6 V18.5 M5.2 12.2 H17.8" stroke="#1f6a8a" stroke-width="3.2"/></svg>
<svg style="position:absolute;left:415px;top:232px;" width="34" height="34" viewBox="0 0 34 34"><path d="M17.5 18.5 L30 31" stroke="#8e9394" stroke-width="4.5" stroke-linecap="round"/><path d="M17.5 18.5 L30 31" stroke="#fff" stroke-width="2.2" stroke-linecap="round"/><circle cx="11.5" cy="12.2" r="10" fill="url(#lens)" stroke="#6fa5b8" stroke-width="1.1"/><path d="M5.2 12.2 H17.8" stroke="#1f6a8a" stroke-width="3.2"/></svg>
<svg style="position:absolute;left:459px;top:234px;" width="31" height="31" viewBox="0 0 31 31"><rect x="0.8" y="0.8" width="29.2" height="29.2" fill="#7ab8cf" stroke="#9aa0a2" stroke-width="1"/><path d="M1 4 H30 V4 Q8 4 1 28Z" fill="#ffffff"/><path d="M1 5 Q10 6 16 10 Q22 14 30 22 V30 H1Z" fill="#c8e7f2" opacity="0.5"/><rect x="0.8" y="0.8" width="29.2" height="2.8" fill="#a9adae"/><path d="M6 28 L25 10" stroke="#1d5c75" stroke-width="2"/><path d="M2.5 30 A4.5 4.5 0 0 1 11.5 30Z" fill="#1d5c75"/></svg>
<svg style="position:absolute;left:499px;top:233px;" width="37" height="36" viewBox="0 0 37 36"><defs><linearGradient id="cubeg" x1="0" y1="0" x2="1" y2="1"><stop offset="0" stop-color="#ffffff"/><stop offset="1" stop-color="#b8bbbc"/></linearGradient><radialGradient id="sphg" cx="0.35" cy="0.35" r="0.7"><stop offset="0" stop-color="#ffffff"/><stop offset="0.6" stop-color="#d8dadb"/><stop offset="1" stop-color="#8a8e90"/></radialGradient></defs><path d="M14 8 L20 3 H33 V16 L27 21 H14Z" fill="url(#cubeg)"/><path d="M27 8 L33 3 V16 L27 21Z" fill="#a4a8a9"/><circle cx="10.5" cy="22" r="9.5" fill="url(#sphg)"/><path d="M31 29 L36 29 L36 34Z" transform="translate(0,0)" fill="#222"/></svg>
<svg style="position:absolute;left:543px;top:234px;" width="36" height="35" viewBox="0 0 36 35"><path d="M1 8 L8.5 1 H30 V22.5 L22.5 30 H1Z" fill="#fff" stroke="#1f5f73" stroke-width="1.4"/><path d="M8.5 1 H30 L22.5 8 H1Z" fill="#a9dbee" stroke="#1f5f73" stroke-width="1.3"/><path d="M30 1 V22.5 L22.5 30 V8Z" fill="#6aaac8" stroke="#1f5f73" stroke-width="1.3"/><path d="M30 29 L35 29 L35 34Z" fill="#222"/></svg>
<svg style="position:absolute;left:586px;top:233px;" width="36" height="36" viewBox="0 0 36 36"><path d="M7 2 H20 L24 14 L20 26 H7 L2 14Z" fill="#dff2f9" stroke="#6a9aaa" stroke-width="0.9"/><path d="M20 2 L26 2 L31 14 L24 14Z" fill="#78b4cc"/><path d="M2 14 H24 L31 14 L26 26 H20" fill="none" stroke="#6a9aaa" stroke-width="0.9"/><path d="M24 14 L31 14 L26 2 Z" fill="#5a9ab8"/><rect x="19" y="19" width="11" height="12" fill="#f3f4f4" stroke="#888"/><path d="M21 22 H28 M21 24.5 H28 M21 27 H28" stroke="#555" stroke-width="0.8"/><path d="M29 30 L34 30 L34 35Z" fill="#222"/></svg>
<svg style="position:absolute;left:628px;top:233px;" width="35" height="34" viewBox="0 0 35 34"><rect x="1" y="1" width="27" height="28" fill="#fff" stroke="#9ea2a3"/><path d="M1 6 H28 M1 11 H28 M1 16 H28 M1 21 H28 M7 6 V29" stroke="#aeb2b3" stroke-width="0.9"/><rect x="17" y="21" width="17" height="12" rx="2" fill="#3a3d3f"/><rect x="21" y="19" width="7" height="3" fill="#3a3d3f"/><circle cx="25.5" cy="27" r="4" fill="#7a7d80" stroke="#222" stroke-width="1"/></svg>
<svg style="position:absolute;left:669px;top:235px;" width="35" height="31" viewBox="0 0 35 31"><path d="M2 5 L6 1 H28 L24 5Z" fill="#a9dbee"/><rect x="2" y="5" width="22" height="23" fill="#fff" stroke="#a9c4cf" stroke-width="0.8"/><path d="M24 5 L28 1 V24 L24 28Z" fill="#6aaac8"/><path d="M24 16 H34" stroke="#222" stroke-width="1.6"/><path d="M23 16 L29 11.5 V20.5Z" fill="#222"/></svg>
<svg style="position:absolute;left:712px;top:234px;" width="33" height="33" viewBox="0 0 33 33"><path d="M1 6 L6 1 H31 V24 L27 31 L4 28Z" fill="#e4f3f9" stroke="#7ba4b4" stroke-width="1"/><path d="M6 8 L25 8 L27 31 L4 28Z" fill="#a9d3e4" opacity="0.8"/><path d="M8 20 L25 15 M10 26 L26 20 M14 30 L26 26" stroke="#e8f6fb" stroke-width="1.5"/><path d="M6 1 L6 8 H25 L31 1 M25 8 L27 31" fill="none" stroke="#7ba4b4" stroke-width="0.9"/></svg>
<svg style="position:absolute;left:752px;top:232px;" width="40" height="36" viewBox="0 0 40 36"><path d="M10.3 6.7 H32.3 L25 25.9 H3.9Z" fill="none" stroke="#806a3e" stroke-width="2.6" stroke-linejoin="miter"/><ellipse cx="28" cy="29.6" rx="7.5" ry="4.6" fill="#3a3d3f"/><circle cx="28" cy="29.6" r="2.3" fill="#fff"/><circle cx="28" cy="29.6" r="1.1" fill="#3a3d3f"/></svg>
<svg style="position:absolute;left:796px;top:232px;" width="32" height="36" viewBox="0 0 32 36"><path d="M17.6 3.9 L4.8 32.3" stroke="#8a7a40" stroke-width="2.4" stroke-dasharray="6 4"/><ellipse cx="22.2" cy="29.6" rx="7.5" ry="4.6" fill="#3a3d3f"/><circle cx="22.2" cy="29.6" r="2.3" fill="#fff"/><circle cx="22.2" cy="29.6" r="1.1" fill="#3a3d3f"/></svg>
<svg style="position:absolute;left:838px;top:232px;" width="36" height="36" viewBox="0 0 36 36"><path d="M6.4 3.6 L14.4 11.6 M14.4 3.6 L6.4 11.6 M21.5 7.2 L29.5 15.2 M29.5 7.2 L21.5 15.2 M2.4 17.3 L10.4 25.3 M10.4 17.3 L2.4 25.3" stroke="#806a3e" stroke-width="1.9"/><ellipse cx="25.1" cy="29.6" rx="7.5" ry="4.6" fill="#3a3d3f"/><circle cx="25.1" cy="29.6" r="2.3" fill="#fff"/><circle cx="25.1" cy="29.6" r="1.1" fill="#3a3d3f"/></svg>
<svg style="position:absolute;left:878px;top:232px;" width="38" height="38" viewBox="0 0 38 38"><path d="M14.4 22.2 V6 M14.4 22.2 H31 M14.4 22.2 L5 31" stroke="#806a3e" stroke-width="2.4" fill="none"/><path d="M10.4 7 L14.4 1.5 L18.4 7Z M29 18 L34.5 22.2 L29 26.4Z M2 27 L1.8 34 L8.5 33Z" fill="#806a3e"/><ellipse cx="28.1" cy="30.5" rx="7.5" ry="4.6" fill="#3a3d3f"/><circle cx="28.1" cy="30.5" r="2.3" fill="#fff"/><circle cx="28.1" cy="30.5" r="1.1" fill="#3a3d3f"/></svg>
<svg style="position:absolute;left:921px;top:232px;" width="36" height="36" viewBox="0 0 36 36"><rect x="2.6" y="2.6" width="21" height="12.9" fill="#fdf6e3" stroke="#8a8e90" stroke-width="1"/><path d="M23.6 8.5 H33.7 L27.5 20" fill="none" stroke="#333" stroke-width="1.1"/><path d="M24.5 18.5 L26 23 L29.8 20Z" fill="#333"/><ellipse cx="26.7" cy="30" rx="7.5" ry="4.6" fill="#3a3d3f"/><circle cx="26.7" cy="30" r="2.3" fill="#fff"/><circle cx="26.7" cy="30" r="1.1" fill="#3a3d3f"/></svg>
<svg style="position:absolute;left:962px;top:232px;" width="36" height="36" viewBox="0 0 36 36"><path d="M8 6.8 L17.8 17.8 L8 29 M17.8 17.8 H30" stroke="#333" stroke-width="2" fill="none"/><circle cx="8.1" cy="6.8" r="4.9" fill="#8ccb7c" stroke="#5aa050" stroke-width="0.8"/><circle cx="30.2" cy="17.8" r="4.9" fill="#f08a7a" stroke="#c86050" stroke-width="0.8"/><circle cx="8.1" cy="29" r="4.9" fill="#7ab8e4" stroke="#4a88b4" stroke-width="0.8"/></svg>
<svg style="position:absolute;left:1005px;top:232px;" width="36" height="36" viewBox="0 0 36 36"><path d="M17 4.5 L32 28 H4 Z" fill="none" stroke="#b5b8b9" stroke-width="5.5" stroke-linejoin="round"/><path d="M26 24 L33 28.5 L26 33Z" fill="#e6e8e8"/></svg>
<svg style="position:absolute;left:1052px;top:236px;" width="26" height="26" viewBox="0 0 26 26"><rect x="2" y="3.3" width="8" height="20.2" fill="#9ea2a3"/><rect x="16.5" y="3.3" width="7.2" height="20.2" fill="#9ea2a3"/></svg>
<svg style="position:absolute;left:1089px;top:239px;" width="36" height="26" viewBox="0 0 36 26"><defs><linearGradient id="gsh" x1="0" y1="0" x2="1" y2="0"><stop offset="0" stop-color="#f4f4f4"/><stop offset="0.4" stop-color="#bfc1c2"/><stop offset="0.7" stop-color="#e8e9e9"/><stop offset="1" stop-color="#bdbfc0"/></linearGradient></defs><path d="M2 2 H34 V23.7 H6 Q13 20 12 13 Q11 7 2 7Z" fill="url(#gsh)"/></svg>
<svg style="position:absolute;left:12px;top:226px;" width="18" height="20" viewBox="0 0 18 20"><rect x="1.5" y="1.5" width="4" height="4" fill="none" stroke="#333" stroke-width="1"/><rect x="1.5" y="8.5" width="4" height="4" fill="none" stroke="#333" stroke-width="1"/><rect x="1.5" y="15" width="4" height="4" fill="none" stroke="#333" stroke-width="1"/><rect x="10" y="8.5" width="4" height="4" fill="none" stroke="#333" stroke-width="1"/><path d="M3.5 5.5 V8.5 M3.5 12.5 V15 M5.5 10.5 H10" stroke="#333" stroke-width="0.8"/></svg>
<svg style="position:absolute;left:129px;top:225px;" width="20" height="22" viewBox="0 0 20 22"><g fill="#f7e3ae" stroke="#a88a4a" stroke-width="0.8"><path d="M1 3 H5 L6 4.5 H11 V12 H1Z"/><path d="M4 6 H8 L9 7.5 H14 V15 H4Z"/><path d="M7 9.5 H11 L12 11 H18 V19 H7Z"/></g></svg>
<svg style="position:absolute;left:206px;top:226px;" width="19" height="18" viewBox="0 0 19 18"><path d="M1 2.5 H6 L7.5 4.5 H17 V16.5 H1Z" fill="#f7e3ae" stroke="#a88a4a" stroke-width="0.9"/><path d="M9.5 7 V13 M6.5 10 H12.5 M7.5 8 L11.5 12 M11.5 8 L7.5 12" stroke="#1f6a8a" stroke-width="0.9"/></svg>
<svg style="position:absolute;left:159px;top:254px;" width="20" height="22" viewBox="0 0 20 22"><path d="M1 4 Q3 1 9 1.5 L10 4.5 H5 Z" fill="#555"/><rect x="4" y="4.5" width="4.5" height="16" fill="#e3c28a" stroke="#9a7a42" stroke-width="0.8"/><rect x="12.5" y="1" width="2.4" height="8" fill="#555"/><rect x="11.8" y="9" width="3.8" height="11.5" rx="1" fill="#e3c28a" stroke="#9a7a42" stroke-width="0.8"/></svg>
<svg style="position:absolute;left:185.5px;top:261px;" width="7" height="4.5" viewBox="0 0 7 4.5"><path d="M0 0 L7 0 L3.5 4Z" fill="#5a6163"/></svg>
<svg style="position:absolute;left:202px;top:254px;" width="18" height="22" viewBox="0 0 18 22"><path d="M1 1 H12 L16 5 V20.5 H1Z" fill="#f7f8f8" stroke="#8a8e90" stroke-width="0.9"/><path d="M4 8 h1 M7 8 H13 M4 12 h1 M7 12 H13 M4 16 h1 M7 16 H13" stroke="#555" stroke-width="1"/></svg>
<svg style="position:absolute;left:227.5px;top:261px;" width="7" height="4.5" viewBox="0 0 7 4.5"><path d="M0 0 L7 0 L3.5 4Z" fill="#5a6163"/></svg>
<svg style="position:absolute;left:248px;top:254px;" width="22" height="22" viewBox="0 0 22 22"><g fill="none" stroke="#c3c6c7" stroke-width="0.9"><rect x="1" y="1" width="4" height="4"/><rect x="1" y="8" width="4" height="4"/><rect x="1" y="15" width="4" height="4"/><rect x="8" y="1" width="11" height="4"/><path d="M10 5 V19 M15 5 V19"/></g><path d="M9 12 Q14 7 20 12 Q14 17 9 12Z" fill="#fff" stroke="#8a8e90" stroke-width="1"/><path d="M8 7 L21 19" stroke="#8a8e90" stroke-width="1"/></svg>
<svg style="position:absolute;left:15px;top:287px;" width="18" height="18" viewBox="0 0 18 18"><path d="M1 1.5 H16 L10 8.5 V16.5 L7 14.5 V8.5Z" fill="#fff" stroke="#555" stroke-width="1"/></svg>
<svg style="position:absolute;left:214px;top:290px;" width="11" height="11" viewBox="0 0 11 11"><path d="M1.5 1.5 L9.5 9.5 M9.5 1.5 L1.5 9.5" stroke="#888" stroke-width="1.2"/></svg>
<svg style="position:absolute;left:234.5px;top:293px;" width="7" height="4.5" viewBox="0 0 7 4.5"><path d="M0 0 L7 0 L3.5 4Z" fill="#5a6163"/></svg>
<svg style="position:absolute;left:253px;top:288px;" width="14" height="14" viewBox="0 0 14 14"><path d="M7 1.5 V12.5 M1.5 7 H12.5" stroke="#7a7f81" stroke-width="2.6"/></svg>
<svg style="position:absolute;left:15px;top:322.1px;" width="16" height="17" viewBox="0 0 16 17"><path d="M1 5 H4 V12 H12 V16 H1Z" fill="#f7e2b4" stroke="#c9a060" stroke-width="0.9"/><path d="M4 3.5 L6.5 1 H15 V9.5 L12.5 12 H4Z" fill="#a9dbee" stroke="#2e7a98" stroke-width="0.9"/><path d="M12.5 3.5 L15 1 V9.5 L12.5 12Z" fill="#6aaac8"/></svg>
<div class="t" style="left:35.63px;top:322.90px;font-size:15px;color:#474e50;transform:scaleX(0.9562);transform-origin:0 0;">0000001305.ASM</div>
<svg style="position:absolute;left:21px;top:351.6px;" width="8" height="10" viewBox="0 0 8 10"><path d="M0.5 0.5 L7.5 5 L0.5 9.5Z" fill="#6c7274"/></svg>
<svg style="position:absolute;left:35px;top:347.6px;" width="16" height="17" viewBox="0 0 16 17"><rect x="0.5" y="0.5" width="15" height="16" fill="#eceeee"/><path d="M2 4 L4.5 2 H13.5 V11.5 L11 14 H2Z M2 4 H11 V14 M11 4 L13.5 2" fill="none" stroke="#bdc0c1" stroke-width="1"/><path d="M6 6 V9 H9" fill="none" stroke="#bdc0c1"/></svg>
<div class="t" style="left:55.96px;top:348.90px;font-size:15px;color:#b9bdbe;transform:scaleX(0.9012);transform-origin:0 0;">0000001306.PRT</div>
<svg style="position:absolute;left:34px;top:376.6px;" width="18" height="12" viewBox="0 0 18 12"><path d="M5 1.5 H16.5 L12.5 10.5 H1.5Z" fill="none" stroke="#55503f" stroke-width="1"/></svg>
<div class="t" style="left:55.92px;top:374.90px;font-size:15px;color:#474e50;transform:scaleX(0.8527);transform-origin:0 0;">SEST_NARYS</div>
<svg style="position:absolute;left:34px;top:402.6px;" width="18" height="12" viewBox="0 0 18 12"><path d="M5 1.5 H16.5 L12.5 10.5 H1.5Z" fill="none" stroke="#55503f" stroke-width="1"/></svg>
<div class="t" style="left:55.93px;top:400.90px;font-size:15px;color:#474e50;transform:scaleX(0.8411);transform-origin:0 0;">SEST_BOKORYS</div>
<svg style="position:absolute;left:34px;top:428.6px;" width="18" height="12" viewBox="0 0 18 12"><path d="M5 1.5 H16.5 L12.5 10.5 H1.5Z" fill="none" stroke="#55503f" stroke-width="1"/></svg>
<div class="t" style="left:55.93px;top:426.90px;font-size:15px;color:#474e50;transform:scaleX(0.8495);transform-origin:0 0;">SEST_PUDORYS</div>
<svg style="position:absolute;left:34px;top:451.6px;" width="20" height="18" viewBox="0 0 20 18"><path d="M6 11.5 V2 M6 11.5 H17 M6 11.5 L1.5 16" stroke="#5a5240" stroke-width="1.1" fill="none"/><path d="M14.5 9.8 L17.5 11.5 L14.5 13.2Z" fill="#5a5240"/></svg>
<div class="t" style="left:55.94px;top:452.90px;font-size:15px;color:#474e50;transform:scaleX(0.8284);transform-origin:0 0;">SEST_CS0</div>
<svg style="position:absolute;left:21px;top:481.6px;" width="8" height="10" viewBox="0 0 8 10"><path d="M0.5 0.5 L7.5 5 L0.5 9.5Z" fill="#6c7274"/></svg>
<svg style="position:absolute;left:35px;top:478.6px;" width="16" height="16" viewBox="0 0 16 16"><path d="M1.5 4.5 L4 2.2 H14 V11.3 L11.5 13.8 H1.5Z" fill="#a9dcf0" stroke="#2e7a98" stroke-width="1"/><path d="M4 2.2 H14 L11.5 4.5 H1.5Z" fill="#cfeefa"/><path d="M14 2.2 V11.3 L11.5 13.8 V4.5Z" fill="#5fa8c8" stroke="#2e7a98" stroke-width="0.8"/></svg>
<div class="t" style="left:55.95px;top:478.90px;font-size:15px;color:#474e50;transform:scaleX(0.9107);transform-origin:0 0;">0000001307.PRT</div>
<svg style="position:absolute;left:21px;top:507.6px;" width="8" height="10" viewBox="0 0 8 10"><path d="M0.5 0.5 L7.5 5 L0.5 9.5Z" fill="#6c7274"/></svg>
<svg style="position:absolute;left:35px;top:504.6px;" width="16" height="16" viewBox="0 0 16 16"><path d="M1.5 4.5 L4 2.2 H14 V11.3 L11.5 13.8 H1.5Z" fill="#a9dcf0" stroke="#2e7a98" stroke-width="1"/><path d="M4 2.2 H14 L11.5 4.5 H1.5Z" fill="#cfeefa"/><path d="M14 2.2 V11.3 L11.5 13.8 V4.5Z" fill="#5fa8c8" stroke="#2e7a98" stroke-width="0.8"/></svg>
<div class="t" style="left:55.95px;top:504.90px;font-size:15px;color:#474e50;transform:scaleX(0.9107);transform-origin:0 0;">0000001308.PRT</div>
<svg style="position:absolute;left:21px;top:533.6px;" width="8" height="10" viewBox="0 0 8 10"><path d="M0.5 0.5 L7.5 5 L0.5 9.5Z" fill="#6c7274"/></svg>
<svg style="position:absolute;left:35px;top:530.6px;" width="16" height="16" viewBox="0 0 16 16"><path d="M1.5 4.5 L4 2.2 H14 V11.3 L11.5 13.8 H1.5Z" fill="#a9dcf0" stroke="#2e7a98" stroke-width="1"/><path d="M4 2.2 H14 L11.5 4.5 H1.5Z" fill="#cfeefa"/><path d="M14 2.2 V11.3 L11.5 13.8 V4.5Z" fill="#5fa8c8" stroke="#2e7a98" stroke-width="0.8"/></svg>
<div class="t" style="left:55.95px;top:530.90px;font-size:15px;color:#474e50;transform:scaleX(0.9107);transform-origin:0 0;">0000001309.PRT</div>
<svg style="position:absolute;left:21px;top:559.6px;" width="8" height="10" viewBox="0 0 8 10"><path d="M0.5 0.5 L7.5 5 L0.5 9.5Z" fill="#6c7274"/></svg>
<svg style="position:absolute;left:35px;top:556.6px;" width="16" height="16" viewBox="0 0 16 16"><rect x="0.5" y="0.5" width="15" height="15" fill="#fff" stroke="#8a8e90"/><g fill="#333"><rect x="4" y="4" width="2" height="2"/><rect x="10" y="4" width="2" height="2"/><rect x="4" y="10" width="2" height="2"/><rect x="10" y="10" width="2" height="2"/></g></svg>
<div class="t" style="left:55.37px;top:556.90px;font-size:15px;color:#474e50;transform:scaleX(0.9415);transform-origin:0 0;">Pattern 1 of 0000001310.PRT</div>
<svg style="position:absolute;left:21px;top:585.6px;" width="8" height="10" viewBox="0 0 8 10"><path d="M0.5 0.5 L7.5 5 L0.5 9.5Z" fill="#6c7274"/></svg>
<svg style="position:absolute;left:35px;top:582.1px;" width="16" height="17" viewBox="0 0 16 17"><path d="M1 5 H4 V12 H12 V16 H1Z" fill="#f7e2b4" stroke="#c9a060" stroke-width="0.9"/><path d="M4 3.5 L6.5 1 H15 V9.5 L12.5 12 H4Z" fill="#a9dbee" stroke="#2e7a98" stroke-width="0.9"/><path d="M12.5 3.5 L15 1 V9.5 L12.5 12Z" fill="#6aaac8"/></svg>
<div class="t" style="left:55.92px;top:582.90px;font-size:15px;color:#474e50;transform:scaleX(0.9688);transform-origin:0 0;">0000001311.ASM</div>
<svg style="position:absolute;left:21px;top:611.6px;" width="8" height="10" viewBox="0 0 8 10"><path d="M0.5 0.5 L7.5 5 L0.5 9.5Z" fill="#6c7274"/></svg>
<svg style="position:absolute;left:35px;top:608.6px;" width="16" height="16" viewBox="0 0 16 16"><path d="M1.5 4.5 L4 2.2 H14 V11.3 L11.5 13.8 H1.5Z" fill="#a9dcf0" stroke="#2e7a98" stroke-width="1"/><path d="M4 2.2 H14 L11.5 4.5 H1.5Z" fill="#cfeefa"/><path d="M14 2.2 V11.3 L11.5 13.8 V4.5Z" fill="#5fa8c8" stroke="#2e7a98" stroke-width="0.8"/></svg>
<div class="t" style="left:55.95px;top:608.90px;font-size:15px;color:#474e50;transform:scaleX(0.9107);transform-origin:0 0;">0000001317.PRT</div>
<svg style="position:absolute;left:21px;top:637.6px;" width="8" height="10" viewBox="0 0 8 10"><path d="M0.5 0.5 L7.5 5 L0.5 9.5Z" fill="#6c7274"/></svg>
<svg style="position:absolute;left:35px;top:634.6px;" width="16" height="16" viewBox="0 0 16 16"><path d="M1.5 4.5 L4 2.2 H14 V11.3 L11.5 13.8 H1.5Z" fill="#a9dcf0" stroke="#2e7a98" stroke-width="1"/><path d="M4 2.2 H14 L11.5 4.5 H1.5Z" fill="#cfeefa"/><path d="M14 2.2 V11.3 L11.5 13.8 V4.5Z" fill="#5fa8c8" stroke="#2e7a98" stroke-width="0.8"/></svg>
<div class="t" style="left:55.95px;top:634.90px;font-size:15px;color:#474e50;transform:scaleX(0.9107);transform-origin:0 0;">0000001319.PRT</div>
<svg style="position:absolute;left:21px;top:663.6px;" width="8" height="10" viewBox="0 0 8 10"><path d="M0.5 0.5 L7.5 5 L0.5 9.5Z" fill="#6c7274"/></svg>
<svg style="position:absolute;left:35px;top:660.1px;" width="16" height="17" viewBox="0 0 16 17"><path d="M1 5 H4 V12 H12 V16 H1Z" fill="#f7e2b4" stroke="#c9a060" stroke-width="0.9"/><path d="M4 3.5 L6.5 1 H15 V9.5 L12.5 12 H4Z" fill="#a9dbee" stroke="#2e7a98" stroke-width="0.9"/><path d="M12.5 3.5 L15 1 V9.5 L12.5 12Z" fill="#6aaac8"/></svg>
<div class="t" style="left:55.92px;top:660.90px;font-size:15px;color:#474e50;transform:scaleX(0.9596);transform-origin:0 0;">0000001322.ASM</div>
<svg style="position:absolute;left:21px;top:689.6px;" width="8" height="10" viewBox="0 0 8 10"><path d="M0.5 0.5 L7.5 5 L0.5 9.5Z" fill="#6c7274"/></svg>
<svg style="position:absolute;left:35px;top:686.6px;" width="16" height="16" viewBox="0 0 16 16"><path d="M1.5 4.5 L4 2.2 H14 V11.3 L11.5 13.8 H1.5Z" fill="#a9dcf0" stroke="#2e7a98" stroke-width="1"/><path d="M4 2.2 H14 L11.5 4.5 H1.5Z" fill="#cfeefa"/><path d="M14 2.2 V11.3 L11.5 13.8 V4.5Z" fill="#5fa8c8" stroke="#2e7a98" stroke-width="0.8"/></svg>
<div class="t" style="left:55.95px;top:686.90px;font-size:15px;color:#474e50;transform:scaleX(0.9107);transform-origin:0 0;">0000001323.PRT</div>
<div style="position:absolute;left:12px;top:713px;width:260px;height:2px;background:#7cbf5e;"></div>
<svg style="position:absolute;left:18px;top:730px;" width="10" height="9" viewBox="0 0 10 9"><path d="M0.5 0.5 H9.5 L5 8Z" fill="#6c7274"/></svg>
<svg style="position:absolute;left:34px;top:726px;" width="17" height="17" viewBox="0 0 17 17"><path d="M1.5 6 L5.5 2 H15.5 V12 L11.5 16 H1.5Z" fill="#fff" stroke="#8a9094" stroke-width="0.9"/><path d="M5.5 6 L9.5 2 H15.5 V12 L11.5 16 H5.5Z" fill="#a9dbee" stroke="#2e7a98" stroke-width="0.8"/><path d="M15.5 2 V12 L11.5 16 V6Z" fill="#6aaac8"/></svg>
<div class="t" style="left:55.85px;top:726.90px;font-size:15px;color:#474e50;transform:scaleX(0.9676);transform-origin:0 0;">Sections</div>
<svg style="position:absolute;left:54px;top:752px;" width="17" height="17" viewBox="0 0 17 17"><path d="M1.5 6 L5.5 2 H15.5 V12 L11.5 16 H1.5Z" fill="#fff" stroke="#8a9094" stroke-width="0.9"/><path d="M5.5 6 L9.5 2 H15.5 V12 L11.5 16 H5.5Z" fill="#a9dbee" stroke="#2e7a98" stroke-width="0.8"/><path d="M15.5 2 V12 L11.5 16 V6Z" fill="#6aaac8"/></svg>
<div class="t" style="left:76.50px;top:752.90px;font-size:15px;color:#474e50;transform:scaleX(1.0025);transform-origin:0 0;">A</div>
<svg style="position:absolute;left:54px;top:778px;" width="17" height="17" viewBox="0 0 17 17"><path d="M1.5 6 L5.5 2 H15.5 V12 L11.5 16 H1.5Z" fill="#fff" stroke="#8a9094" stroke-width="0.9"/><path d="M5.5 6 L9.5 2 H15.5 V12 L11.5 16 H5.5Z" fill="#a9dbee" stroke="#2e7a98" stroke-width="0.8"/><path d="M15.5 2 V12 L11.5 16 V6Z" fill="#6aaac8"/></svg>
<div class="t" style="left:75.15px;top:778.90px;font-size:15px;color:#474e50;transform:scaleX(1.1215);transform-origin:0 0;">B</div>
<svg style="position:absolute;left:96px;top:822px;" width="14" height="14" viewBox="0 0 14 14"><path d="M1 4.5 H7 V1 L13 7 L7 13 V9.5 H1Z" fill="#58b0d8" stroke="#2a6f90" stroke-width="0.9"/></svg>
<div style="position:absolute;left:100.5px;top:847.5px;width:4px;height:4px;background:#3a4a50;border-radius:50%;"></div>
<div style="position:absolute;left:10.5px;top:860.5px;width:21px;height:21px;box-sizing:border-box;background:#dfe2e3;border:1px solid #b6babb;"></div>
<svg style="position:absolute;left:14px;top:863px;" width="15" height="16" viewBox="0 0 15 16"><g fill="none" stroke="#333" stroke-width="1"><rect x="1.5" y="1" width="3.5" height="3.5"/><rect x="1.5" y="6.5" width="3.5" height="3.5"/><rect x="1.5" y="12" width="3.5" height="3.5"/><rect x="9" y="6.5" width="3.5" height="3.5"/></g></svg>
<svg style="position:absolute;left:38px;top:862px;" width="19" height="19" viewBox="0 0 19 19"><circle cx="9.5" cy="9.5" r="7" fill="#3a8fd0"/><path d="M4 7 Q8 5 11 8 Q13 11 16 10" stroke="#9ad4f4" stroke-width="1.4" fill="none"/><ellipse cx="9.5" cy="9.5" rx="9" ry="3.5" transform="rotate(-40 9.5 9.5)" fill="none" stroke="#1a4a7a" stroke-width="1.1"/></svg>
<svg style="position:absolute;left:64px;top:862px;" width="19" height="19" viewBox="0 0 19 19"><rect x="1.5" y="1.5" width="15.5" height="15.5" fill="#e6ecef" stroke="#2d4f5f" stroke-width="1"/><rect x="2.5" y="2.5" width="13.5" height="6" fill="#f7f9fa"/></svg>
<div style="position:absolute;left:93px;top:860px;width:1px;height:22px;background:#c6cacb;"></div>
<div style="position:absolute;left:713px;top:852px;width:1px;height:30px;background:#c6cacb;"></div>
<div style="position:absolute;left:717px;top:852px;width:1px;height:30px;background:#c6cacb;"></div>
<div style="position:absolute;left:720.5px;top:853px;width:41.5px;height:24px;box-sizing:border-box;border:1px solid #c6cacb;"></div>
<div style="position:absolute;left:747.5px;top:854px;width:1px;height:22px;background:#d0d4d5;"></div>
<svg style="position:absolute;left:725px;top:856px;" width="18" height="17" viewBox="0 0 18 17"><path d="M2 6 L4 2 H7 L8 6 V14 H1 V8Z M16 6 L14 2 H11 L10 6 V14 H17 V8Z" fill="#333"/><rect x="7" y="6" width="4" height="4" fill="#333"/><rect x="3" y="9" width="3" height="3" fill="#888"/><rect x="12" y="9" width="3" height="3" fill="#888"/></svg>
<svg style="position:absolute;left:751.5px;top:863px;" width="7" height="4.5" viewBox="0 0 7 4.5"><path d="M0 0 L7 0 L3.5 4Z" fill="#555"/></svg>
<div style="position:absolute;left:767px;top:853px;width:40px;height:24px;box-sizing:border-box;border:1px solid #c6cacb;"></div>
<div style="position:absolute;left:764px;top:852px;width:1px;height:30px;background:#c6cacb;"></div>
<svg style="position:absolute;left:777px;top:856px;" width="20" height="18" viewBox="0 0 20 18"><path d="M1.5 5 L5.5 1.5 H17.5 V13 L13.5 16.5 H1.5Z" fill="#fff" stroke="#333" stroke-width="1"/><path d="M1.5 5 H13.5 V16.5 M13.5 5 L17.5 1.5" fill="none" stroke="#333" stroke-width="1"/><rect x="4" y="7" width="7" height="7" fill="#f3e3a8"/><rect x="6" y="6" width="6" height="6" fill="#9fd6ee" stroke="#2e7a98" stroke-width="0.6"/></svg>
<div style="position:absolute;left:932.5px;top:853.5px;width:224px;height:28px;box-sizing:border-box;background:#f6f8f8;border:1px solid #b5b9ba;"></div>
<div style="position:absolute;left:1141px;top:854px;width:1px;height:27px;background:#b5b9ba;"></div>
<svg style="position:absolute;left:1144.5px;top:866px;" width="8" height="4.5" viewBox="0 0 8 4.5"><path d="M0 0 L8 0 L4.0 4Z" fill="#444"/></svg>
<div class="t" style="left:939.71px;top:860.38px;font-size:15.5px;color:#3c4446;transform:scaleX(1.0153);transform-origin:0 0;">Geometry</div>
<svg style="position:absolute;left:1158px;top:866px;" width="16" height="18" viewBox="0 0 16 18"><path d="M2 16 L15 3 M7 16 L15 8 M12 16 L15 13" stroke="#b5b9ba" stroke-width="1.2"/></svg>
<svg style="position:absolute;left:0;top:0" width="1179" height="890" viewBox="0 0 1179 890"><defs><clipPath id="ga"><rect x="280" y="219" width="895" height="592"/></clipPath></defs><g clip-path="url(#ga)"><polygon points="621.4,758.3 621.4,812.0 706.0,812.0 706.0,787.0" fill="#b5bec2" stroke="none" stroke-width="1" stroke-linejoin="round" /><polygon points="706.0,787.0 706.0,812.0 816.2,812.0 816.2,764.0" fill="#80888c" stroke="none" stroke-width="1" stroke-linejoin="round" /><line x1="756.8" y1="775" x2="756.8" y2="812" stroke="#111" stroke-width="2" /><line x1="767.3" y1="772" x2="767.3" y2="812" stroke="#333" stroke-width="1" /><line x1="621.4" y1="758" x2="621.4" y2="812" stroke="#202224" stroke-width="1.3" /><line x1="816.2" y1="764" x2="816.2" y2="812" stroke="#202224" stroke-width="1.3" /><line x1="706" y1="787" x2="706" y2="812" stroke="#555" stroke-width="1" /><polygon points="416.5,551.5 680.6,642.0 706.0,787.0 621.4,758.3" fill="#81888c" stroke="none" stroke-width="1" stroke-linejoin="round" /><polygon points="680.6,642.0 1019.5,569.0 816.2,764.0 706.0,787.0" fill="#676e71" stroke="none" stroke-width="1" stroke-linejoin="round" /><polyline points="416.5,551.5 621.4,758.3 706.0,787.0 816.2,764.0 1019.5,569.0" fill="none" stroke="#202224" stroke-width="1.6" stroke-linejoin="round" /><line x1="680.6" y1="642" x2="706" y2="787" stroke="#202224" stroke-width="2" /><polygon points="754.5,323.0 1019.5,414.2 1019.5,569.0 755.5,478.5" fill="#b9c2c6" stroke="none" stroke-width="1" stroke-linejoin="round" /><polygon points="416.5,551.5 755.5,478.5 1019.5,569.0 680.6,642.0" fill="#a6aeb2" stroke="none" stroke-width="1" stroke-linejoin="round" /><line x1="755.5" y1="478.5" x2="416.5" y2="551.5" stroke="#202224" stroke-width="1.2" /><defs><linearGradient id="hg484" gradientUnits="userSpaceOnUse" x1="0" y1="-13.5" x2="0" y2="13.5"><stop offset="0" stop-color="#c09a6c"/><stop offset="0.6" stop-color="#b8936a"/><stop offset="1" stop-color="#9f7d52"/></linearGradient></defs><g transform="translate(484.3 411.9) rotate(-11.73)"><path d="M0 -13.5 H173.6 A7 13.5 0 0 1 173.6 13.5 H0Z" fill="url(#hg484)"/><path d="M170.6 -13.0 A7 13.5 0 0 1 170.6 13.0" fill="none" stroke="#2a2a2a" stroke-width="1.1" transform="translate(3 0)"/><ellipse cx="0" cy="0" rx="7.2" ry="13.5" fill="#c99f6f" stroke="#2a2520" stroke-width="1.2"/><ellipse cx="0.8" cy="0" rx="5.6" ry="11.7" fill="none" stroke="#e2c59a" stroke-width="0.7"/></g><polygon points="416.5,510.4 471.8,498.5 503.7,379.3 508.8,375.3 532.2,370.2 536.2,373.2 514.6,458.6 516.0,463.0 542.6,464.5 547.7,446.0 529.0,446.0 529.0,422.0 558.7,422.0 558.6,403.8 542.4,405.3 540.3,402.7 544.4,381.9 565.8,383.9 572.9,362.0 583.8,358.6 640.7,346.7 645.5,347.9 646.0,349.7 624.8,433.0 625.5,434.3 653.1,440.4 657.2,437.0 659.0,421.0 640.0,421.0 638.3,419.0 641.7,399.3 645.0,398.0 667.0,399.3 669.3,381.8 668.0,379.7 650.4,380.4 648.5,378.0 654.5,357.5 676.0,360.2 678.7,356.2 683.5,336.6 685.9,335.4 754.5,323.0 755.5,478.5 416.5,551.5" fill="#8a9297" stroke="#202224" stroke-width="1.2" stroke-linejoin="round" /><line x1="528" y1="372" x2="512.8" y2="430" stroke="#202224" stroke-width="1" /><line x1="512.8" y1="430" x2="498" y2="485" stroke="#202224" stroke-width="1" /><line x1="582" y1="359.8" x2="567" y2="420" stroke="#111" stroke-width="1.8" /><line x1="584" y1="359.8" x2="569" y2="420" stroke="#e8ecee" stroke-width="0.9" /><line x1="637.8" y1="348" x2="618.2" y2="420" stroke="#202224" stroke-width="1" /><line x1="693" y1="335.4" x2="671.6" y2="420" stroke="#111" stroke-width="1.8" /><line x1="695" y1="335.4" x2="673.6" y2="420" stroke="#e8ecee" stroke-width="0.9" /><line x1="497.6" y1="484.9" x2="552.8" y2="473" stroke="#111" stroke-width="1.8" /><line x1="471.8" y1="498.5" x2="590" y2="473" stroke="#202224" stroke-width="1" /><line x1="608.7" y1="462.9" x2="663" y2="450" stroke="#111" stroke-width="1.5" /><polygon points="416.5,510.4 680.6,601.2 680.6,642.0 416.5,551.5" fill="#b6bfc4" stroke="none" stroke-width="1" stroke-linejoin="round" /><line x1="433.5" y1="512" x2="433.5" y2="557.5" stroke="#6e7579" stroke-width="0.8" /><polyline points="416.5,551.5 416.5,510.4" fill="none" stroke="#202224" stroke-width="1.3" stroke-linejoin="round" /><line x1="416.5" y1="510.4" x2="680.6" y2="601.2" stroke="#3a3f42" stroke-width="1.0" /><line x1="680.6" y1="601.2" x2="680.6" y2="642" stroke="#111" stroke-width="2.6" /><line x1="416.5" y1="551.5" x2="680.6" y2="642" stroke="#202224" stroke-width="1.6" /><line x1="433.6" y1="557.3" x2="616" y2="748" stroke="#6b7276" stroke-width="0.7" /><line x1="754.5" y1="323" x2="754.2" y2="455" stroke="#111" stroke-width="1.8" /><line x1="754.2" y1="455" x2="749.3" y2="545" stroke="#111" stroke-width="1.6" /><line x1="726.5" y1="487" x2="719.6" y2="592" stroke="#222" stroke-width="1" /><line x1="637.3" y1="388.0" x2="950.0" y2="495.0" stroke="#5f6568" stroke-width="4.3" /><line x1="637.3" y1="388.0" x2="950.0" y2="495.0" stroke="#f7f9f9" stroke-width="3.0" /><line x1="744.0" y1="380.5" x2="1009.5" y2="471.5" stroke="#5f6568" stroke-width="4.1" /><line x1="744.0" y1="380.5" x2="1009.5" y2="471.5" stroke="#f7f9f9" stroke-width="2.8" /><line x1="478.5" y1="439.4" x2="747.0" y2="378.4" stroke="#80868a" stroke-width="2.7" /><line x1="478.5" y1="438.8" x2="747.0" y2="377.8" stroke="#dfe2e3" stroke-width="1.8" /><circle cx="747.5" cy="378.3" r="1.4" fill="#4a4f52"/><circle cx="478.5" cy="439.5" r="1.2" fill="#6a6f72"/><line x1="491.1" y1="443.7" x2="759.6" y2="382.7" stroke="#80868a" stroke-width="2.7" /><line x1="491.1" y1="443.1" x2="759.6" y2="382.1" stroke="#dfe2e3" stroke-width="1.8" /><circle cx="760.1" cy="382.6" r="1.4" fill="#4a4f52"/><circle cx="491.1" cy="443.8" r="1.2" fill="#6a6f72"/><line x1="503.8" y1="448.1" x2="772.3" y2="387.1" stroke="#80868a" stroke-width="2.7" /><line x1="503.8" y1="447.5" x2="772.3" y2="386.5" stroke="#dfe2e3" stroke-width="1.8" /><circle cx="772.8" cy="387.0" r="1.4" fill="#4a4f52"/><circle cx="503.8" cy="448.2" r="1.2" fill="#6a6f72"/><line x1="516.4" y1="452.4" x2="784.9" y2="391.4" stroke="#80868a" stroke-width="2.7" /><line x1="516.4" y1="451.8" x2="784.9" y2="390.8" stroke="#dfe2e3" stroke-width="1.8" /><circle cx="785.4" cy="391.3" r="1.4" fill="#4a4f52"/><circle cx="516.4" cy="452.5" r="1.2" fill="#6a6f72"/><line x1="529.1" y1="456.7" x2="797.6" y2="395.7" stroke="#80868a" stroke-width="2.7" /><line x1="529.1" y1="456.1" x2="797.6" y2="395.1" stroke="#dfe2e3" stroke-width="1.8" /><circle cx="798.1" cy="395.6" r="1.4" fill="#4a4f52"/><circle cx="529.1" cy="456.8" r="1.2" fill="#6a6f72"/><line x1="541.7" y1="461.1" x2="810.2" y2="400.1" stroke="#80868a" stroke-width="2.7" /><line x1="541.7" y1="460.5" x2="810.2" y2="399.5" stroke="#dfe2e3" stroke-width="1.8" /><circle cx="810.7" cy="400.0" r="1.4" fill="#4a4f52"/><circle cx="541.7" cy="461.2" r="1.2" fill="#6a6f72"/><line x1="554.4" y1="465.4" x2="822.9" y2="404.4" stroke="#80868a" stroke-width="2.7" /><line x1="554.4" y1="464.8" x2="822.9" y2="403.8" stroke="#dfe2e3" stroke-width="1.8" /><circle cx="823.4" cy="404.3" r="1.4" fill="#4a4f52"/><circle cx="554.4" cy="465.5" r="1.2" fill="#6a6f72"/><line x1="567.0" y1="469.7" x2="835.5" y2="408.7" stroke="#80868a" stroke-width="2.7" /><line x1="567.0" y1="469.1" x2="835.5" y2="408.1" stroke="#dfe2e3" stroke-width="1.8" /><circle cx="836.0" cy="408.6" r="1.4" fill="#4a4f52"/><circle cx="567.0" cy="469.8" r="1.2" fill="#6a6f72"/><line x1="579.6" y1="474.1" x2="848.1" y2="413.1" stroke="#80868a" stroke-width="2.7" /><line x1="579.6" y1="473.5" x2="848.1" y2="412.5" stroke="#dfe2e3" stroke-width="1.8" /><circle cx="848.6" cy="413.0" r="1.4" fill="#4a4f52"/><circle cx="579.6" cy="474.2" r="1.2" fill="#6a6f72"/><line x1="592.3" y1="478.4" x2="860.8" y2="417.4" stroke="#80868a" stroke-width="2.7" /><line x1="592.3" y1="477.8" x2="860.8" y2="416.8" stroke="#dfe2e3" stroke-width="1.8" /><circle cx="861.3" cy="417.3" r="1.4" fill="#4a4f52"/><circle cx="592.3" cy="478.5" r="1.2" fill="#6a6f72"/><line x1="604.9" y1="482.7" x2="873.4" y2="421.7" stroke="#80868a" stroke-width="2.7" /><line x1="604.9" y1="482.1" x2="873.4" y2="421.1" stroke="#dfe2e3" stroke-width="1.8" /><circle cx="873.9" cy="421.6" r="1.4" fill="#4a4f52"/><circle cx="604.9" cy="482.8" r="1.2" fill="#6a6f72"/><line x1="617.6" y1="487.1" x2="886.1" y2="426.1" stroke="#80868a" stroke-width="2.7" /><line x1="617.6" y1="486.5" x2="886.1" y2="425.5" stroke="#dfe2e3" stroke-width="1.8" /><circle cx="886.6" cy="426.0" r="1.4" fill="#4a4f52"/><circle cx="617.6" cy="487.2" r="1.2" fill="#6a6f72"/><line x1="630.2" y1="491.4" x2="898.7" y2="430.4" stroke="#80868a" stroke-width="2.7" /><line x1="630.2" y1="490.8" x2="898.7" y2="429.8" stroke="#dfe2e3" stroke-width="1.8" /><circle cx="899.2" cy="430.3" r="1.4" fill="#4a4f52"/><circle cx="630.2" cy="491.5" r="1.2" fill="#6a6f72"/><line x1="642.9" y1="495.7" x2="911.4" y2="434.7" stroke="#80868a" stroke-width="2.7" /><line x1="642.9" y1="495.1" x2="911.4" y2="434.1" stroke="#dfe2e3" stroke-width="1.8" /><circle cx="911.9" cy="434.6" r="1.4" fill="#4a4f52"/><circle cx="642.9" cy="495.8" r="1.2" fill="#6a6f72"/><line x1="655.5" y1="500.1" x2="924.0" y2="439.1" stroke="#80868a" stroke-width="2.7" /><line x1="655.5" y1="499.5" x2="924.0" y2="438.5" stroke="#dfe2e3" stroke-width="1.8" /><circle cx="924.5" cy="439.0" r="1.4" fill="#4a4f52"/><circle cx="655.5" cy="500.2" r="1.2" fill="#6a6f72"/><line x1="668.1" y1="504.4" x2="936.6" y2="443.4" stroke="#80868a" stroke-width="2.7" /><line x1="668.1" y1="503.8" x2="936.6" y2="442.8" stroke="#dfe2e3" stroke-width="1.8" /><circle cx="937.1" cy="443.3" r="1.4" fill="#4a4f52"/><circle cx="668.1" cy="504.5" r="1.2" fill="#6a6f72"/><line x1="680.8" y1="508.7" x2="949.3" y2="447.7" stroke="#80868a" stroke-width="2.7" /><line x1="680.8" y1="508.1" x2="949.3" y2="447.1" stroke="#dfe2e3" stroke-width="1.8" /><circle cx="949.8" cy="447.6" r="1.4" fill="#4a4f52"/><circle cx="680.8" cy="508.8" r="1.2" fill="#6a6f72"/><line x1="693.4" y1="513.1" x2="961.9" y2="452.1" stroke="#80868a" stroke-width="2.7" /><line x1="693.4" y1="512.5" x2="961.9" y2="451.5" stroke="#dfe2e3" stroke-width="1.8" /><circle cx="962.4" cy="452.0" r="1.4" fill="#4a4f52"/><circle cx="693.4" cy="513.2" r="1.2" fill="#6a6f72"/><line x1="706.1" y1="517.4" x2="974.6" y2="456.4" stroke="#80868a" stroke-width="2.7" /><line x1="706.1" y1="516.8" x2="974.6" y2="455.8" stroke="#dfe2e3" stroke-width="1.8" /><circle cx="975.1" cy="456.3" r="1.4" fill="#4a4f52"/><circle cx="706.1" cy="517.5" r="1.2" fill="#6a6f72"/><line x1="718.7" y1="521.7" x2="987.2" y2="460.7" stroke="#80868a" stroke-width="2.7" /><line x1="718.7" y1="521.1" x2="987.2" y2="460.1" stroke="#dfe2e3" stroke-width="1.8" /><circle cx="987.7" cy="460.6" r="1.4" fill="#4a4f52"/><circle cx="718.7" cy="521.8" r="1.2" fill="#6a6f72"/><line x1="731.4" y1="526.1" x2="999.9" y2="465.1" stroke="#80868a" stroke-width="2.7" /><line x1="731.4" y1="525.5" x2="999.9" y2="464.5" stroke="#dfe2e3" stroke-width="1.8" /><circle cx="1000.4" cy="465.0" r="1.4" fill="#4a4f52"/><circle cx="731.4" cy="526.2" r="1.2" fill="#6a6f72"/><line x1="744.0" y1="530.4" x2="1012.5" y2="469.4" stroke="#80868a" stroke-width="2.7" /><line x1="744.0" y1="529.8" x2="1012.5" y2="468.8" stroke="#dfe2e3" stroke-width="1.8" /><circle cx="1013.0" cy="469.3" r="1.4" fill="#4a4f52"/><circle cx="744.0" cy="530.5" r="1.2" fill="#6a6f72"/><line x1="527.9" y1="413.0" x2="829.0" y2="517.0" stroke="#5f6568" stroke-width="4.5" /><line x1="527.9" y1="413.0" x2="829.0" y2="517.0" stroke="#f7f9f9" stroke-width="3.2" /><line x1="478.5" y1="439.0" x2="744.0" y2="530.0" stroke="#5f6568" stroke-width="4.3" /><line x1="478.5" y1="439.0" x2="744.0" y2="530.0" stroke="#f7f9f9" stroke-width="3.0" /><circle cx="478.5" cy="439.3" r="1.3" fill="#5a5f62"/><circle cx="491.1" cy="443.6" r="1.3" fill="#5a5f62"/><circle cx="503.8" cy="448.0" r="1.3" fill="#5a5f62"/><circle cx="516.4" cy="452.3" r="1.3" fill="#5a5f62"/><circle cx="529.1" cy="456.6" r="1.3" fill="#5a5f62"/><circle cx="541.7" cy="461.0" r="1.3" fill="#5a5f62"/><circle cx="554.4" cy="465.3" r="1.3" fill="#5a5f62"/><circle cx="567.0" cy="469.6" r="1.3" fill="#5a5f62"/><circle cx="579.6" cy="474.0" r="1.3" fill="#5a5f62"/><circle cx="592.3" cy="478.3" r="1.3" fill="#5a5f62"/><circle cx="604.9" cy="482.6" r="1.3" fill="#5a5f62"/><circle cx="617.6" cy="487.0" r="1.3" fill="#5a5f62"/><circle cx="630.2" cy="491.3" r="1.3" fill="#5a5f62"/><circle cx="642.9" cy="495.6" r="1.3" fill="#5a5f62"/><circle cx="655.5" cy="500.0" r="1.3" fill="#5a5f62"/><circle cx="668.1" cy="504.3" r="1.3" fill="#5a5f62"/><circle cx="680.8" cy="508.6" r="1.3" fill="#5a5f62"/><circle cx="693.4" cy="513.0" r="1.3" fill="#5a5f62"/><circle cx="706.1" cy="517.3" r="1.3" fill="#5a5f62"/><circle cx="718.7" cy="521.6" r="1.3" fill="#5a5f62"/><circle cx="731.4" cy="526.0" r="1.3" fill="#5a5f62"/><circle cx="744.0" cy="530.3" r="1.3" fill="#5a5f62"/><polygon points="680.6,642.0 680.6,601.2 737.5,590.0 771.0,469.0 773.1,467.5 777.1,466.6 802.7,463.2 806.1,465.2 805.4,467.9 785.2,548.8 786.6,552.1 812.2,556.9 816.2,554.2 818.2,539.3 801.4,538.0 798.7,534.0 801.4,517.1 804.1,515.1 823.0,517.8 828.3,498.9 812.2,496.9 809.5,494.2 813.5,476.7 816.2,474.6 833.7,477.3 836.4,476.0 842.5,455.8 845.9,453.1 911.0,440.0 914.8,438.9 915.6,441.2 897.0,513.0 895.0,531.0 910.0,531.0 909.3,508.1 914.0,493.2 934.5,490.8 939.2,475.9 937.7,474.3 922.7,473.5 919.6,470.4 920.4,456.2 925.0,451.5 944.0,452.3 945.5,450.7 951.8,431.8 953.4,430.2 961.8,428.3 1019.5,414.2 1019.5,569.0" fill="#8b9397" stroke="#202224" stroke-width="1.2" stroke-linejoin="round" /><polygon points="785.2,548.8 786.6,552.1 812.2,556.9 816.2,554.2 818.2,539.3 801.4,538.0 798.7,534.0 801.4,517.1 790.0,517.0" fill="#dfe6ea" stroke="none" stroke-width="1" stroke-linejoin="round" /><line x1="794" y1="465.2" x2="769" y2="565" stroke="#111" stroke-width="1.8" /><line x1="796" y1="465.2" x2="771" y2="565" stroke="#e8ecee" stroke-width="0.9" /><line x1="906.2" y1="440.5" x2="874.8" y2="553.7" stroke="#111" stroke-width="1.8" /><line x1="908.2" y1="440.5" x2="876.8" y2="553.7" stroke="#e8ecee" stroke-width="0.9" /><line x1="765.7" y1="577" x2="821.3" y2="565.9" stroke="#111" stroke-width="1.6" /><polyline points="874.8,554.7 930.5,542.0 937.0,527.5" fill="none" stroke="#111" stroke-width="1.6" stroke-linejoin="round" /><polygon points="913.0,529.5 923.5,530.5 922.0,534.5 914.0,533.5" fill="#e6ebed" stroke="none" stroke-width="1" stroke-linejoin="round" /><line x1="715" y1="593" x2="1019.5" y2="529.5" stroke="#555b5e" stroke-width="0.8" /><line x1="1019.5" y1="414.2" x2="1019.5" y2="569" stroke="#202224" stroke-width="1.6" /><line x1="754.5" y1="323" x2="1019.5" y2="414.2" stroke="#202224" stroke-width="1.3" /><line x1="703.5" y1="599" x2="703.5" y2="637" stroke="#6a7175" stroke-width="0.8" /><defs><linearGradient id="hg838" gradientUnits="userSpaceOnUse" x1="0" y1="-13.5" x2="0" y2="13.5"><stop offset="0" stop-color="#c09a6c"/><stop offset="0.6" stop-color="#b8936a"/><stop offset="1" stop-color="#9f7d52"/></linearGradient></defs><g transform="translate(838.4 534.5) rotate(-11.76)"><path d="M0 -13.5 H173.6 A7 13.5 0 0 1 173.6 13.5 H0Z" fill="url(#hg838)"/><path d="M170.6 -13.0 A7 13.5 0 0 1 170.6 13.0" fill="none" stroke="#2a2a2a" stroke-width="1.1" transform="translate(3 0)"/><ellipse cx="0" cy="0" rx="7.2" ry="13.5" fill="#c99f6f" stroke="#2a2520" stroke-width="1.2"/><ellipse cx="0.8" cy="0" rx="5.6" ry="11.7" fill="none" stroke="#e2c59a" stroke-width="0.7"/></g></g></svg>
</body></html>
